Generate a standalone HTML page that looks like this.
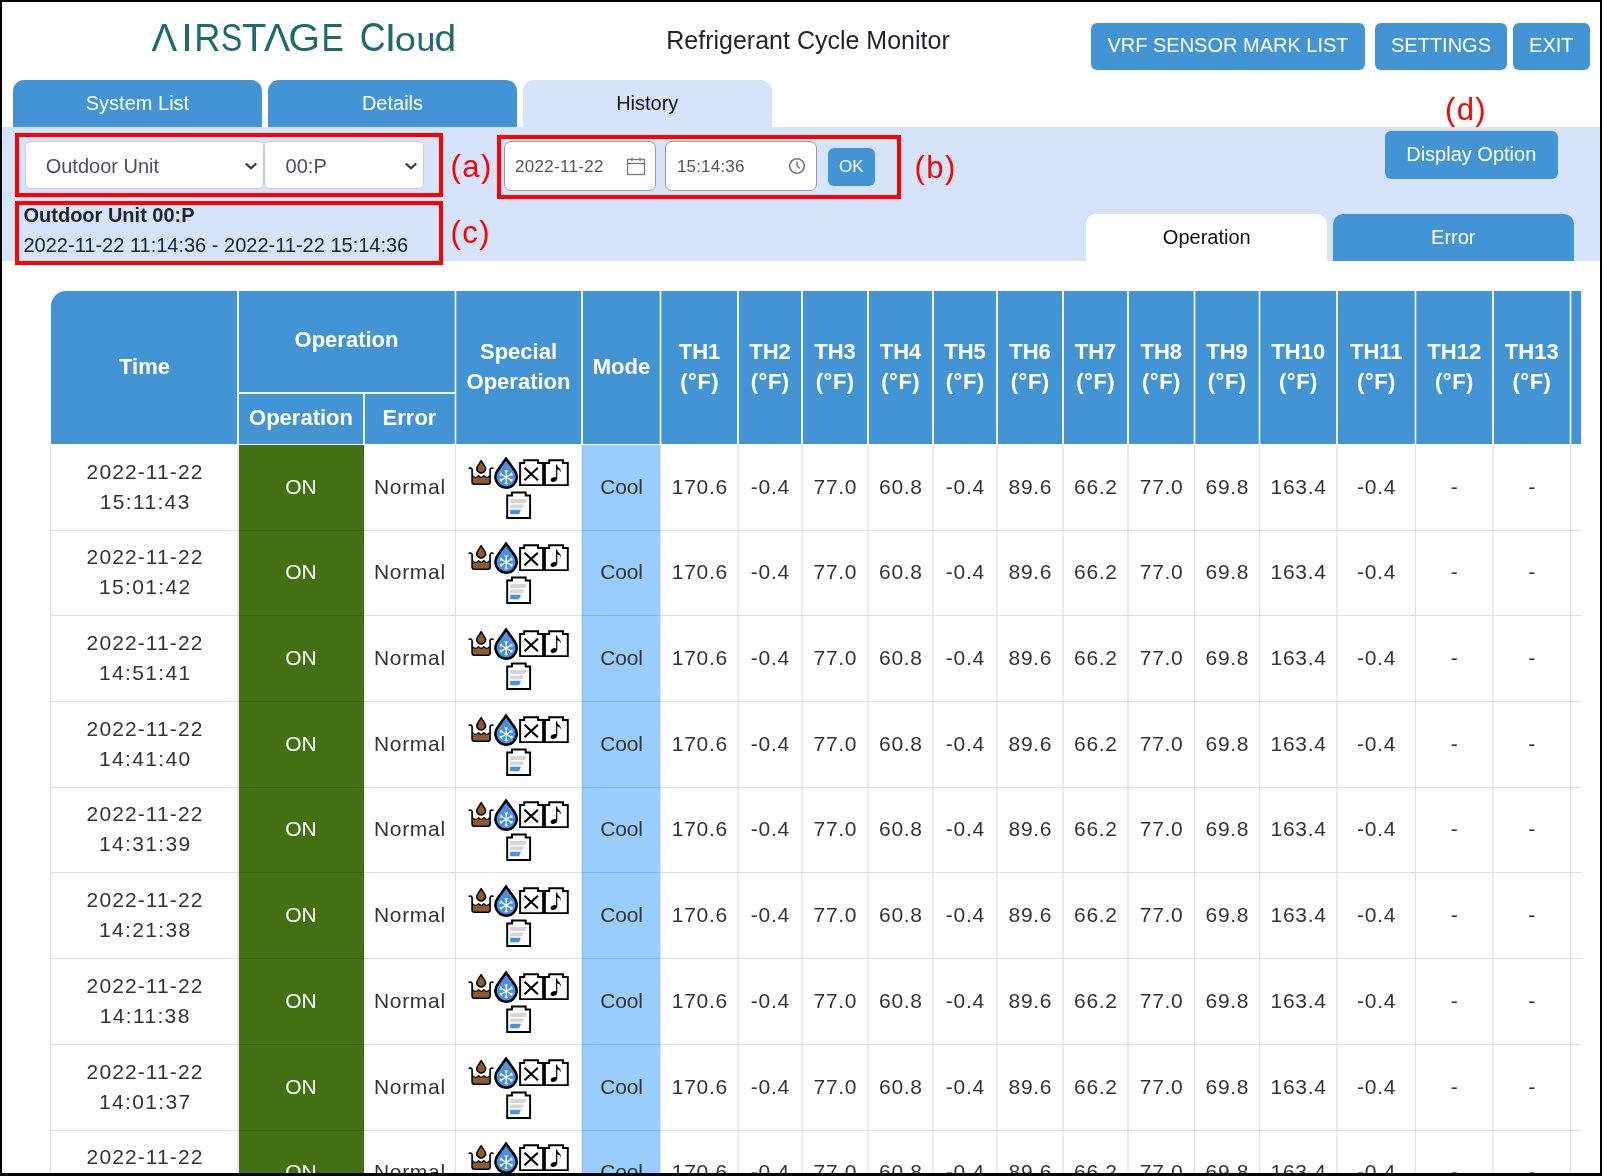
<!DOCTYPE html>
<html><head><meta charset="utf-8">
<style>
html,body{margin:0;padding:0;}
body{will-change:transform;width:1602px;height:1176px;overflow:hidden;position:relative;background:#fff;font-family:"Liberation Sans", sans-serif;}
.t{position:absolute;white-space:nowrap;}
.r{position:absolute;}
.clip{position:absolute;left:0;top:0;width:1581px;height:1176px;overflow:hidden;}
.frame{position:absolute;left:0;top:0;width:1602px;height:1176px;box-sizing:border-box;border:2px solid #000;border-bottom-width:3px;z-index:50;}
</style></head><body>
<div class="t" style="left:0;top:0;font-size:100px;line-height:100px;color:#1e6a6f;transform-origin:0 0;transform:matrix(0.38479,0,0,0.39127,151.508,17.937)">Λ</div>
<div class="t" style="left:0;top:0;font-size:100px;line-height:100px;color:#1e6a6f;transform-origin:0 0;transform:matrix(0.43243,0,0,0.39127,180.900,17.937)">I</div>
<div class="t" style="left:0;top:0;font-size:100px;line-height:100px;color:#1e6a6f;transform-origin:0 0;transform:matrix(0.36287,0,0,0.39127,194.206,17.937)">R</div>
<div class="t" style="left:0;top:0;font-size:100px;line-height:100px;color:#1e6a6f;transform-origin:0 0;transform:matrix(0.31826,0,0,0.39152,220.968,17.925)">S</div>
<div class="t" style="left:0;top:0;font-size:100px;line-height:100px;color:#1e6a6f;transform-origin:0 0;transform:matrix(0.39823,0,0,0.39127,242.104,17.937)">T</div>
<div class="t" style="left:0;top:0;font-size:100px;line-height:100px;color:#1e6a6f;transform-origin:0 0;transform:matrix(0.39240,0,0,0.39127,263.904,17.937)">Λ</div>
<div class="t" style="left:0;top:0;font-size:100px;line-height:100px;color:#1e6a6f;transform-origin:0 0;transform:matrix(0.41073,0,0,0.39011,288.146,18.046)">G</div>
<div class="t" style="left:0;top:0;font-size:100px;line-height:100px;color:#1e6a6f;transform-origin:0 0;transform:matrix(0.33364,0,0,0.39127,321.447,17.937)">E</div>
<div class="t" style="left:0;top:0;font-size:100px;line-height:100px;color:#1e6a6f;transform-origin:0 0;transform:matrix(0.35731,0,0,0.40000,359.813,17.200)">C</div>
<div class="t" style="left:0;top:0;font-size:100px;line-height:100px;color:#1e6a6f;transform-origin:0 0;transform:matrix(0.44571,0,0,0.37517,385.491,19.298)">l</div>
<div class="t" style="left:0;top:0;font-size:100px;line-height:100px;color:#1e6a6f;transform-origin:0 0;transform:matrix(0.38095,0,0,0.33790,394.781,22.510)">o</div>
<div class="t" style="left:0;top:0;font-size:100px;line-height:100px;color:#1e6a6f;transform-origin:0 0;transform:matrix(0.33647,0,0,0.32558,416.513,23.563)">u</div>
<div class="t" style="left:0;top:0;font-size:100px;line-height:100px;color:#1e6a6f;transform-origin:0 0;transform:matrix(0.38889,0,0,0.37551,434.547,19.294)">d</div>
<div class="t" style="left:599px;width:418px;text-align:center;top:27.94px;font-size:25.0px;line-height:25.0px;color:#212529;font-weight:normal;letter-spacing:0px;text-indent:0px;">Refrigerant Cycle Monitor</div>
<div class="r" style="left:1091px;top:23px;width:274px;height:47px;background:#4294d4;border-radius:6px;"></div>
<div class="t" style="left:1091px;width:274px;text-align:center;top:35.37px;font-size:20px;line-height:20px;color:#fff;font-weight:normal;letter-spacing:0px;text-indent:0px;">VRF SENSOR MARK LIST</div>
<div class="r" style="left:1375px;top:23px;width:132px;height:47px;background:#4294d4;border-radius:6px;"></div>
<div class="t" style="left:1375px;width:132px;text-align:center;top:35.37px;font-size:20px;line-height:20px;color:#fff;font-weight:normal;letter-spacing:0px;text-indent:0px;">SETTINGS</div>
<div class="r" style="left:1512.6px;top:23px;width:77.40000000000009px;height:47px;background:#4294d4;border-radius:6px;"></div>
<div class="t" style="left:1512.6px;width:77.40000000000009px;text-align:center;top:35.37px;font-size:20px;line-height:20px;color:#fff;font-weight:normal;letter-spacing:0px;text-indent:0px;">EXIT</div>
<div class="r" style="left:12.5px;top:80px;width:249.89999999999998px;height:47.5px;background:#4294d4;border-radius:11px 11px 0 0;"></div>
<div class="t" style="left:12.5px;width:249.89999999999998px;text-align:center;top:92.77px;font-size:20px;line-height:20px;color:#fff;font-weight:normal;letter-spacing:0px;text-indent:0px;">System List</div>
<div class="r" style="left:267.6px;top:80px;width:249.79999999999995px;height:47.5px;background:#4294d4;border-radius:11px 11px 0 0;"></div>
<div class="t" style="left:267.6px;width:249.79999999999995px;text-align:center;top:92.77px;font-size:20px;line-height:20px;color:#fff;font-weight:normal;letter-spacing:0px;text-indent:0px;">Details</div>
<div class="r" style="left:522.5px;top:80px;width:249.5px;height:47.5px;background:#d5e3fb;border-radius:11px 11px 0 0;"></div>
<div class="t" style="left:522.5px;width:249.5px;text-align:center;top:92.77px;font-size:20px;line-height:20px;color:#111;font-weight:normal;letter-spacing:0px;text-indent:0px;">History</div>
<div class="r" style="left:2px;top:127px;width:1598px;height:134px;background:#d5e3fb;"></div>
<div class="r" style="left:24.7px;top:141.3px;width:238.90000000000003px;height:47.29999999999998px;background:#fff;border:1.3px solid #c9d0d8;border-radius:6px;box-sizing:border-box;"></div>
<div class="t" style="left:45.7px;top:155.67px;font-size:20px;line-height:20px;color:#495057;font-weight:normal;letter-spacing:0px;">Outdoor Unit</div>
<svg class="r" style="left:245.2px;top:161.6px" width="12" height="8" viewBox="0 0 12 8"><path d="M0.8 1.5 L6 6.3 L11.2 1.5" fill="none" stroke="#343a40" stroke-width="2.3" stroke-linecap="butt" stroke-linejoin="miter"/></svg>
<div class="r" style="left:263.9px;top:141.3px;width:159.70000000000005px;height:47.29999999999998px;background:#fff;border:1.3px solid #c9d0d8;border-radius:6px;box-sizing:border-box;"></div>
<div class="t" style="left:285.6px;top:155.67px;font-size:20px;line-height:20px;color:#495057;font-weight:normal;letter-spacing:0px;">00:P</div>
<svg class="r" style="left:405.4px;top:161.6px" width="12" height="8" viewBox="0 0 12 8"><path d="M0.8 1.5 L6 6.3 L11.2 1.5" fill="none" stroke="#343a40" stroke-width="2.3" stroke-linecap="butt" stroke-linejoin="miter"/></svg>
<div class="r" style="left:504.1px;top:141.2px;width:151.69999999999993px;height:49.70000000000002px;background:#fff;border:1px solid #9a9a9a;border-radius:7px;box-sizing:border-box;"></div>
<div class="t" style="left:515.0px;top:158.41px;font-size:17px;line-height:17px;color:#555;font-weight:normal;letter-spacing:0.3px;">2022-11-22</div>
<svg class="r" style="left:626px;top:156px" width="20" height="20" viewBox="0 0 20 20"><rect x="1.5" y="3.5" width="17" height="15" fill="none" stroke="#777" stroke-width="1.3"/><line x1="1.5" y1="7.5" x2="18.5" y2="7.5" stroke="#777" stroke-width="1.3"/><line x1="6" y1="1.5" x2="6" y2="5" stroke="#777" stroke-width="1.3"/><line x1="14" y1="1.5" x2="14" y2="5" stroke="#777" stroke-width="1.3"/></svg>
<div class="r" style="left:665.2px;top:141.2px;width:151.69999999999993px;height:49.70000000000002px;background:#fff;border:1px solid #9a9a9a;border-radius:7px;box-sizing:border-box;"></div>
<div class="t" style="left:676.9px;top:158.41px;font-size:17px;line-height:17px;color:#555;font-weight:normal;letter-spacing:0.2px;">15:14:36</div>
<svg class="r" style="left:788px;top:157px" width="18" height="18" viewBox="0 0 18 18"><circle cx="9" cy="9" r="7.3" fill="none" stroke="#777" stroke-width="1.6"/><path d="M9 4.5 V9 L12 11.5" fill="none" stroke="#777" stroke-width="1.5"/></svg>
<div class="r" style="left:827.6px;top:147.5px;width:47.39999999999998px;height:38.400000000000006px;background:#4294d4;border-radius:6px;"></div>
<div class="t" style="left:827.6px;width:47.39999999999998px;text-align:center;top:158.01px;font-size:17px;line-height:17px;color:#fff;font-weight:normal;letter-spacing:0px;text-indent:0px;">OK</div>
<div class="r" style="left:1385px;top:131px;width:172.5px;height:47.80000000000001px;background:#4294d4;border-radius:6px;"></div>
<div class="t" style="left:1385px;width:172.5px;text-align:center;top:144.07px;font-size:20px;line-height:20px;color:#fff;font-weight:normal;letter-spacing:0px;text-indent:0px;">Display Option</div>
<div class="t" style="left:23.5px;top:205.17px;font-size:20px;line-height:20px;color:#212529;font-weight:bold;letter-spacing:0px;">Outdoor Unit 00:P</div>
<div class="t" style="left:23.5px;top:235.37px;font-size:20px;line-height:20px;color:#212529;font-weight:normal;letter-spacing:0px;">2022-11-22 11:14:36 - 2022-11-22 15:14:36</div>
<div class="r" style="left:1086.1px;top:213.6px;width:241.4000000000001px;height:47.400000000000006px;background:#fff;border-radius:10px 10px 0 0;"></div>
<div class="t" style="left:1086.1px;width:241.4000000000001px;text-align:center;top:226.77px;font-size:20px;line-height:20px;color:#111;font-weight:normal;letter-spacing:0px;text-indent:0px;">Operation</div>
<div class="r" style="left:1332.7px;top:213.6px;width:241.20000000000005px;height:47.400000000000006px;background:#4294d4;border-radius:10px 10px 0 0;"></div>
<div class="t" style="left:1332.7px;width:241.20000000000005px;text-align:center;top:226.77px;font-size:20px;line-height:20px;color:#fff;font-weight:normal;letter-spacing:0px;text-indent:0px;">Error</div>
<div class="r" style="left:15px;top:133px;width:428px;height:64px;border:4px solid #ff0000;box-sizing:border-box;"></div>
<div class="r" style="left:497px;top:135px;width:404px;height:64px;border:4px solid #ff0000;box-sizing:border-box;"></div>
<div class="r" style="left:15px;top:201px;width:428px;height:63.60000000000002px;border:4px solid #ff0000;box-sizing:border-box;"></div>
<div class="t" style="left:450.6px;top:151.36px;font-size:31px;line-height:31px;color:#ff0000;font-weight:normal;letter-spacing:1.4px;">(a)</div>
<div class="t" style="left:914.6px;top:151.66px;font-size:31px;line-height:31px;color:#ff0000;font-weight:normal;letter-spacing:1.4px;">(b)</div>
<div class="t" style="left:450.6px;top:217.46px;font-size:31px;line-height:31px;color:#ff0000;font-weight:normal;letter-spacing:1.4px;">(c)</div>
<div class="t" style="left:1445px;top:93.56px;font-size:31px;line-height:31px;color:#ff0000;font-weight:normal;letter-spacing:1.4px;">(d)</div>
<div class="clip"><div class="r" style="left:51px;top:291px;width:1649px;height:153px;background:#4294d4;border-top-left-radius:15px;"></div>
<div class="r" style="left:237px;top:291px;width:2px;height:153px;background:#eef4fb;"></div>
<div class="r" style="left:363px;top:392px;width:2px;height:52px;background:#eef4fb;"></div>
<div class="r" style="left:455px;top:291px;width:1px;height:153px;background:#fff;"></div>
<div class="r" style="left:454px;top:291px;width:1px;height:153px;background:rgba(255,255,255,0.3);"></div>
<div class="r" style="left:456px;top:291px;width:1px;height:153px;background:rgba(255,255,255,0.3);"></div>
<div class="r" style="left:581px;top:291px;width:2px;height:153px;background:#eef4fb;"></div>
<div class="r" style="left:660px;top:291px;width:1px;height:153px;background:#fff;"></div>
<div class="r" style="left:659px;top:291px;width:1px;height:153px;background:rgba(255,255,255,0.3);"></div>
<div class="r" style="left:661px;top:291px;width:1px;height:153px;background:rgba(255,255,255,0.3);"></div>
<div class="r" style="left:737px;top:291px;width:2px;height:153px;background:#eef4fb;"></div>
<div class="r" style="left:801px;top:291px;width:2px;height:153px;background:#eef4fb;"></div>
<div class="r" style="left:867px;top:291px;width:2px;height:153px;background:#eef4fb;"></div>
<div class="r" style="left:932px;top:291px;width:2px;height:153px;background:#eef4fb;"></div>
<div class="r" style="left:996px;top:291px;width:2px;height:153px;background:#eef4fb;"></div>
<div class="r" style="left:1062px;top:291px;width:2px;height:153px;background:#eef4fb;"></div>
<div class="r" style="left:1127px;top:291px;width:2px;height:153px;background:#eef4fb;"></div>
<div class="r" style="left:1194px;top:291px;width:1px;height:153px;background:#fff;"></div>
<div class="r" style="left:1193px;top:291px;width:1px;height:153px;background:rgba(255,255,255,0.3);"></div>
<div class="r" style="left:1195px;top:291px;width:1px;height:153px;background:rgba(255,255,255,0.3);"></div>
<div class="r" style="left:1259px;top:291px;width:1px;height:153px;background:#fff;"></div>
<div class="r" style="left:1258px;top:291px;width:1px;height:153px;background:rgba(255,255,255,0.3);"></div>
<div class="r" style="left:1260px;top:291px;width:1px;height:153px;background:rgba(255,255,255,0.3);"></div>
<div class="r" style="left:1336px;top:291px;width:2px;height:153px;background:#eef4fb;"></div>
<div class="r" style="left:1415px;top:291px;width:1px;height:153px;background:#fff;"></div>
<div class="r" style="left:1414px;top:291px;width:1px;height:153px;background:rgba(255,255,255,0.3);"></div>
<div class="r" style="left:1416px;top:291px;width:1px;height:153px;background:rgba(255,255,255,0.3);"></div>
<div class="r" style="left:1492px;top:291px;width:2px;height:153px;background:#eef4fb;"></div>
<div class="r" style="left:1570px;top:291px;width:1px;height:153px;background:#fff;"></div>
<div class="r" style="left:1569px;top:291px;width:1px;height:153px;background:rgba(255,255,255,0.3);"></div>
<div class="r" style="left:1571px;top:291px;width:1px;height:153px;background:rgba(255,255,255,0.3);"></div>
<div class="r" style="left:238px;top:392px;width:217px;height:2px;background:#eef4fb;"></div>
<div class="t" style="left:51px;width:187px;text-align:center;top:356.18px;font-size:22px;line-height:22px;color:#ffffff;font-weight:bold;letter-spacing:0px;text-indent:0px;">Time</div>
<div class="t" style="left:238px;width:217px;text-align:center;top:329.38px;font-size:22px;line-height:22px;color:#ffffff;font-weight:bold;letter-spacing:0px;text-indent:0px;">Operation</div>
<div class="t" style="left:238px;width:126px;text-align:center;top:406.58px;font-size:22px;line-height:22px;color:#ffffff;font-weight:bold;letter-spacing:0px;text-indent:0px;">Operation</div>
<div class="t" style="left:364px;width:91px;text-align:center;top:406.58px;font-size:22px;line-height:22px;color:#ffffff;font-weight:bold;letter-spacing:0px;text-indent:0px;">Error</div>
<div class="t" style="left:455px;width:127px;text-align:center;top:341.08px;font-size:22px;line-height:22px;color:#ffffff;font-weight:bold;letter-spacing:0px;text-indent:0px;">Special</div>
<div class="t" style="left:455px;width:127px;text-align:center;top:371.08px;font-size:22px;line-height:22px;color:#ffffff;font-weight:bold;letter-spacing:0px;text-indent:0px;">Operation</div>
<div class="t" style="left:582px;width:79px;text-align:center;top:355.98px;font-size:22px;line-height:22px;color:#ffffff;font-weight:bold;letter-spacing:0px;text-indent:0px;">Mode</div>
<div class="t" style="left:661px;width:77px;text-align:center;top:341.08px;font-size:22px;line-height:22px;color:#ffffff;font-weight:bold;letter-spacing:0px;text-indent:0px;">TH1</div>
<div class="t" style="left:661px;width:77px;text-align:center;top:371.28px;font-size:22px;line-height:22px;color:#ffffff;font-weight:bold;letter-spacing:0.5px;text-indent:0.5px;">(&#176;F)</div>
<div class="t" style="left:738px;width:64px;text-align:center;top:341.08px;font-size:22px;line-height:22px;color:#ffffff;font-weight:bold;letter-spacing:0px;text-indent:0px;">TH2</div>
<div class="t" style="left:738px;width:64px;text-align:center;top:371.28px;font-size:22px;line-height:22px;color:#ffffff;font-weight:bold;letter-spacing:0.5px;text-indent:0.5px;">(&#176;F)</div>
<div class="t" style="left:802px;width:66px;text-align:center;top:341.08px;font-size:22px;line-height:22px;color:#ffffff;font-weight:bold;letter-spacing:0px;text-indent:0px;">TH3</div>
<div class="t" style="left:802px;width:66px;text-align:center;top:371.28px;font-size:22px;line-height:22px;color:#ffffff;font-weight:bold;letter-spacing:0.5px;text-indent:0.5px;">(&#176;F)</div>
<div class="t" style="left:868px;width:65px;text-align:center;top:341.08px;font-size:22px;line-height:22px;color:#ffffff;font-weight:bold;letter-spacing:0px;text-indent:0px;">TH4</div>
<div class="t" style="left:868px;width:65px;text-align:center;top:371.28px;font-size:22px;line-height:22px;color:#ffffff;font-weight:bold;letter-spacing:0.5px;text-indent:0.5px;">(&#176;F)</div>
<div class="t" style="left:933px;width:64px;text-align:center;top:341.08px;font-size:22px;line-height:22px;color:#ffffff;font-weight:bold;letter-spacing:0px;text-indent:0px;">TH5</div>
<div class="t" style="left:933px;width:64px;text-align:center;top:371.28px;font-size:22px;line-height:22px;color:#ffffff;font-weight:bold;letter-spacing:0.5px;text-indent:0.5px;">(&#176;F)</div>
<div class="t" style="left:997px;width:66px;text-align:center;top:341.08px;font-size:22px;line-height:22px;color:#ffffff;font-weight:bold;letter-spacing:0px;text-indent:0px;">TH6</div>
<div class="t" style="left:997px;width:66px;text-align:center;top:371.28px;font-size:22px;line-height:22px;color:#ffffff;font-weight:bold;letter-spacing:0.5px;text-indent:0.5px;">(&#176;F)</div>
<div class="t" style="left:1063px;width:65px;text-align:center;top:341.08px;font-size:22px;line-height:22px;color:#ffffff;font-weight:bold;letter-spacing:0px;text-indent:0px;">TH7</div>
<div class="t" style="left:1063px;width:65px;text-align:center;top:371.28px;font-size:22px;line-height:22px;color:#ffffff;font-weight:bold;letter-spacing:0.5px;text-indent:0.5px;">(&#176;F)</div>
<div class="t" style="left:1128px;width:66.5px;text-align:center;top:341.08px;font-size:22px;line-height:22px;color:#ffffff;font-weight:bold;letter-spacing:0px;text-indent:0px;">TH8</div>
<div class="t" style="left:1128px;width:66.5px;text-align:center;top:371.28px;font-size:22px;line-height:22px;color:#ffffff;font-weight:bold;letter-spacing:0.5px;text-indent:0.5px;">(&#176;F)</div>
<div class="t" style="left:1194.5px;width:65.0px;text-align:center;top:341.08px;font-size:22px;line-height:22px;color:#ffffff;font-weight:bold;letter-spacing:0px;text-indent:0px;">TH9</div>
<div class="t" style="left:1194.5px;width:65.0px;text-align:center;top:371.28px;font-size:22px;line-height:22px;color:#ffffff;font-weight:bold;letter-spacing:0.5px;text-indent:0.5px;">(&#176;F)</div>
<div class="t" style="left:1259.5px;width:77.5px;text-align:center;top:341.08px;font-size:22px;line-height:22px;color:#ffffff;font-weight:bold;letter-spacing:0px;text-indent:0px;">TH10</div>
<div class="t" style="left:1259.5px;width:77.5px;text-align:center;top:371.28px;font-size:22px;line-height:22px;color:#ffffff;font-weight:bold;letter-spacing:0.5px;text-indent:0.5px;">(&#176;F)</div>
<div class="t" style="left:1337px;width:78.5px;text-align:center;top:341.08px;font-size:22px;line-height:22px;color:#ffffff;font-weight:bold;letter-spacing:0px;text-indent:0px;">TH11</div>
<div class="t" style="left:1337px;width:78.5px;text-align:center;top:371.28px;font-size:22px;line-height:22px;color:#ffffff;font-weight:bold;letter-spacing:0.5px;text-indent:0.5px;">(&#176;F)</div>
<div class="t" style="left:1415.5px;width:77.5px;text-align:center;top:341.08px;font-size:22px;line-height:22px;color:#ffffff;font-weight:bold;letter-spacing:0px;text-indent:0px;">TH12</div>
<div class="t" style="left:1415.5px;width:77.5px;text-align:center;top:371.28px;font-size:22px;line-height:22px;color:#ffffff;font-weight:bold;letter-spacing:0.5px;text-indent:0.5px;">(&#176;F)</div>
<div class="t" style="left:1493px;width:77.5px;text-align:center;top:341.08px;font-size:22px;line-height:22px;color:#ffffff;font-weight:bold;letter-spacing:0px;text-indent:0px;">TH13</div>
<div class="t" style="left:1493px;width:77.5px;text-align:center;top:371.28px;font-size:22px;line-height:22px;color:#ffffff;font-weight:bold;letter-spacing:0.5px;text-indent:0.5px;">(&#176;F)</div>
<div class="t" style="left:1570.5px;width:89.5px;text-align:center;top:341.08px;font-size:22px;line-height:22px;color:#ffffff;font-weight:bold;letter-spacing:0px;text-indent:0px;">TH14</div>
<div class="t" style="left:1570.5px;width:89.5px;text-align:center;top:371.28px;font-size:22px;line-height:22px;color:#ffffff;font-weight:bold;letter-spacing:0.5px;text-indent:0.5px;">(&#176;F)</div>
<div class="r" style="left:239px;top:445px;width:125px;height:86px;background:#437012;"></div>
<div class="r" style="left:582px;top:445px;width:78px;height:86px;background:#99ccff;"></div>
<div class="r" style="left:50px;top:530px;width:1650px;height:1px;background:rgba(0,0,0,0.13);"></div>
<div class="r" style="left:50px;top:445px;width:1px;height:85px;background:rgba(0,0,0,0.13);"></div>
<div class="r" style="left:237px;top:445px;width:2px;height:85px;background:rgba(0,0,0,0.075);"></div>
<div class="r" style="left:363px;top:445px;width:2px;height:85px;background:rgba(0,0,0,0.075);"></div>
<div class="r" style="left:455px;top:445px;width:1px;height:85px;background:rgba(0,0,0,0.13);"></div>
<div class="r" style="left:581px;top:445px;width:2px;height:85px;background:rgba(0,0,0,0.075);"></div>
<div class="r" style="left:660px;top:445px;width:1px;height:85px;background:rgba(0,0,0,0.13);"></div>
<div class="r" style="left:737px;top:445px;width:2px;height:85px;background:rgba(0,0,0,0.075);"></div>
<div class="r" style="left:801px;top:445px;width:2px;height:85px;background:rgba(0,0,0,0.075);"></div>
<div class="r" style="left:867px;top:445px;width:2px;height:85px;background:rgba(0,0,0,0.075);"></div>
<div class="r" style="left:932px;top:445px;width:2px;height:85px;background:rgba(0,0,0,0.075);"></div>
<div class="r" style="left:996px;top:445px;width:2px;height:85px;background:rgba(0,0,0,0.075);"></div>
<div class="r" style="left:1062px;top:445px;width:2px;height:85px;background:rgba(0,0,0,0.075);"></div>
<div class="r" style="left:1127px;top:445px;width:2px;height:85px;background:rgba(0,0,0,0.075);"></div>
<div class="r" style="left:1194px;top:445px;width:1px;height:85px;background:rgba(0,0,0,0.13);"></div>
<div class="r" style="left:1259px;top:445px;width:1px;height:85px;background:rgba(0,0,0,0.13);"></div>
<div class="r" style="left:1336px;top:445px;width:2px;height:85px;background:rgba(0,0,0,0.075);"></div>
<div class="r" style="left:1415px;top:445px;width:1px;height:85px;background:rgba(0,0,0,0.13);"></div>
<div class="r" style="left:1492px;top:445px;width:2px;height:85px;background:rgba(0,0,0,0.075);"></div>
<div class="r" style="left:1570px;top:445px;width:1px;height:85px;background:rgba(0,0,0,0.13);"></div>
<div class="t" style="left:51px;width:187px;text-align:center;top:461.12px;font-size:21px;line-height:21px;color:#333333;font-weight:normal;letter-spacing:1.1px;text-indent:1.1px;">2022-11-22</div>
<div class="t" style="left:51px;width:187px;text-align:center;top:490.92px;font-size:21px;line-height:21px;color:#333333;font-weight:normal;letter-spacing:1.35px;text-indent:1.35px;">15:11:43</div>
<div class="t" style="left:238px;width:126px;text-align:center;top:476.12px;font-size:21px;line-height:21px;color:#fff;font-weight:normal;letter-spacing:0px;text-indent:0px;">ON</div>
<div class="t" style="left:364px;width:91px;text-align:center;top:476.12px;font-size:21px;line-height:21px;color:#333333;font-weight:normal;letter-spacing:0.7px;text-indent:0.7px;">Normal</div>
<svg class="r" style="left:465px;top:453.70px" width="110" height="68" viewBox="0 0 110 68">
<path d="M16.15 6.6 L12.52 12.29 A4.3 4.3 0 1 0 19.78 12.29 Z" fill="#8e5a2a" stroke="#000" stroke-width="1.5" stroke-linejoin="round"/>
<path d="M7.6 21.7 Q10.55 25.2 13.5 21.7 Q16.2 25.2 18.9 21.7 Q21.8 25.2 24.6 21.7 V29.2 H7.6 Z" fill="#8e5a2a"/>
<path d="M7.6 21.7 Q10.55 25.2 13.5 21.7 Q16.2 25.2 18.9 21.7 Q21.8 25.2 24.6 21.7" fill="none" stroke="#000" stroke-width="1.3" stroke-linejoin="round"/>
<path d="M4.2 14.3 Q6.6 13.6 7.1 15.6 V28 Q7.1 30.1 9.3 30.1 H22.9 Q25.1 30.1 25.1 28 V15.6 Q25.6 13.6 27.9 14.2" fill="none" stroke="#000" stroke-width="1.65" stroke-linecap="round" stroke-linejoin="round"/>
<path d="M41.1 4.6 L32.37 16.82 A10.7 10.7 0 1 0 49.83 16.82 Z" fill="#4a90e2" stroke="#000" stroke-width="2.5" stroke-linejoin="miter" stroke-miterlimit="10"/>
<g stroke="#fff" stroke-width="1.15" stroke-linecap="round" fill="none"><path d="M41.20 23.20 L41.20 16.50 M41.20 23.20 L47.00 19.85 M41.20 23.20 L47.00 26.55 M41.20 23.20 L41.20 29.90 M41.20 23.20 L35.40 26.55 M41.20 23.20 L35.40 19.85"/><path stroke-width="0.95" d="M41.20 18.38 L39.97 16.80 M41.20 18.38 L42.43 16.80 M45.38 20.79 L46.13 18.93 M45.38 20.79 L47.36 21.07 M45.38 25.61 L47.36 25.33 M45.38 25.61 L46.13 27.47 M41.20 28.02 L42.43 29.60 M41.20 28.02 L39.97 29.60 M37.02 25.61 L36.27 27.47 M37.02 25.61 L35.04 25.33 M37.02 20.79 L35.04 21.07 M37.02 20.79 L36.27 18.93"/></g>
<path d="M55.1 8.9 H59.2 V6.3 H73.1 V8.9 H79 V31.1 H55.1 Z" fill="#fff" stroke="#000" stroke-width="1.95"/>
<path d="M59.5 13.7 L72.9 26.3 M72.9 13.7 L59.5 26.3" stroke="#000" stroke-width="2.1"/>
<path d="M79 8.9 H84.2 V6.3 H98 V8.9 H102.8 V31.1 H79 Z" fill="#fff" stroke="#000" stroke-width="1.95"/>
<path d="M79 8.9 V31.1" stroke="#000" stroke-width="3.7"/>
<ellipse cx="88.7" cy="25.5" rx="3.2" ry="2.3" transform="rotate(-25 88.7 25.5)" fill="#000"/>
<path d="M91.7 25 V10.6" fill="none" stroke="#000" stroke-width="1.2"/>
<path d="M91.1 10.4 C92 13.2 96.6 14.2 95.9 18.6 C95.4 16.4 93.6 15.4 91.1 15 Z" fill="#000"/>
<path d="M42.2 41.45 H46.95 V38.5 H60.7 V41.45 H65.1 V64.0 H42.2 Z" fill="#fff" stroke="#000" stroke-width="1.95"/>
<path d="M45.1 44.9 H62 L60 49 H45.1 Z" fill="#d6d6d6"/>
<path d="M45.1 50.5 H59 L57.3 54.2 H45.1 Z" fill="#d6d6d6"/>
<path d="M45.1 55.8 H56 L54.1 60.2 H45.1 Z" fill="#4a90e2"/>
</svg>
<div class="t" style="left:582px;width:79px;text-align:center;top:476.12px;font-size:21px;line-height:21px;color:#333333;font-weight:normal;letter-spacing:-0.2px;text-indent:-0.2px;">Cool</div>
<div class="t" style="left:661px;width:77px;text-align:center;top:476.12px;font-size:21px;line-height:21px;color:#333333;font-weight:normal;letter-spacing:0.7px;text-indent:0.7px;">170.6</div>
<div class="t" style="left:738px;width:64px;text-align:center;top:476.12px;font-size:21px;line-height:21px;color:#333333;font-weight:normal;letter-spacing:0.7px;text-indent:0.7px;">-0.4</div>
<div class="t" style="left:802px;width:66px;text-align:center;top:476.12px;font-size:21px;line-height:21px;color:#333333;font-weight:normal;letter-spacing:0.7px;text-indent:0.7px;">77.0</div>
<div class="t" style="left:868px;width:65px;text-align:center;top:476.12px;font-size:21px;line-height:21px;color:#333333;font-weight:normal;letter-spacing:0.7px;text-indent:0.7px;">60.8</div>
<div class="t" style="left:933px;width:64px;text-align:center;top:476.12px;font-size:21px;line-height:21px;color:#333333;font-weight:normal;letter-spacing:0.7px;text-indent:0.7px;">-0.4</div>
<div class="t" style="left:997px;width:66px;text-align:center;top:476.12px;font-size:21px;line-height:21px;color:#333333;font-weight:normal;letter-spacing:0.7px;text-indent:0.7px;">89.6</div>
<div class="t" style="left:1063px;width:65px;text-align:center;top:476.12px;font-size:21px;line-height:21px;color:#333333;font-weight:normal;letter-spacing:0.7px;text-indent:0.7px;">66.2</div>
<div class="t" style="left:1128px;width:66.5px;text-align:center;top:476.12px;font-size:21px;line-height:21px;color:#333333;font-weight:normal;letter-spacing:0.7px;text-indent:0.7px;">77.0</div>
<div class="t" style="left:1194.5px;width:65.0px;text-align:center;top:476.12px;font-size:21px;line-height:21px;color:#333333;font-weight:normal;letter-spacing:0.7px;text-indent:0.7px;">69.8</div>
<div class="t" style="left:1259.5px;width:77.5px;text-align:center;top:476.12px;font-size:21px;line-height:21px;color:#333333;font-weight:normal;letter-spacing:0.7px;text-indent:0.7px;">163.4</div>
<div class="t" style="left:1337px;width:78.5px;text-align:center;top:476.12px;font-size:21px;line-height:21px;color:#333333;font-weight:normal;letter-spacing:0.7px;text-indent:0.7px;">-0.4</div>
<div class="t" style="left:1415.5px;width:77.5px;text-align:center;top:476.12px;font-size:21px;line-height:21px;color:#333333;font-weight:normal;letter-spacing:0.7px;text-indent:0.7px;">-</div>
<div class="t" style="left:1493px;width:77.5px;text-align:center;top:476.12px;font-size:21px;line-height:21px;color:#333333;font-weight:normal;letter-spacing:0.7px;text-indent:0.7px;">-</div>
<div class="r" style="left:239px;top:531px;width:125px;height:85px;background:#437012;"></div>
<div class="r" style="left:582px;top:531px;width:78px;height:85px;background:#99ccff;"></div>
<div class="r" style="left:50px;top:615px;width:1650px;height:1px;background:rgba(0,0,0,0.13);"></div>
<div class="r" style="left:50px;top:531px;width:1px;height:84px;background:rgba(0,0,0,0.13);"></div>
<div class="r" style="left:237px;top:531px;width:2px;height:84px;background:rgba(0,0,0,0.075);"></div>
<div class="r" style="left:363px;top:531px;width:2px;height:84px;background:rgba(0,0,0,0.075);"></div>
<div class="r" style="left:455px;top:531px;width:1px;height:84px;background:rgba(0,0,0,0.13);"></div>
<div class="r" style="left:581px;top:531px;width:2px;height:84px;background:rgba(0,0,0,0.075);"></div>
<div class="r" style="left:660px;top:531px;width:1px;height:84px;background:rgba(0,0,0,0.13);"></div>
<div class="r" style="left:737px;top:531px;width:2px;height:84px;background:rgba(0,0,0,0.075);"></div>
<div class="r" style="left:801px;top:531px;width:2px;height:84px;background:rgba(0,0,0,0.075);"></div>
<div class="r" style="left:867px;top:531px;width:2px;height:84px;background:rgba(0,0,0,0.075);"></div>
<div class="r" style="left:932px;top:531px;width:2px;height:84px;background:rgba(0,0,0,0.075);"></div>
<div class="r" style="left:996px;top:531px;width:2px;height:84px;background:rgba(0,0,0,0.075);"></div>
<div class="r" style="left:1062px;top:531px;width:2px;height:84px;background:rgba(0,0,0,0.075);"></div>
<div class="r" style="left:1127px;top:531px;width:2px;height:84px;background:rgba(0,0,0,0.075);"></div>
<div class="r" style="left:1194px;top:531px;width:1px;height:84px;background:rgba(0,0,0,0.13);"></div>
<div class="r" style="left:1259px;top:531px;width:1px;height:84px;background:rgba(0,0,0,0.13);"></div>
<div class="r" style="left:1336px;top:531px;width:2px;height:84px;background:rgba(0,0,0,0.075);"></div>
<div class="r" style="left:1415px;top:531px;width:1px;height:84px;background:rgba(0,0,0,0.13);"></div>
<div class="r" style="left:1492px;top:531px;width:2px;height:84px;background:rgba(0,0,0,0.075);"></div>
<div class="r" style="left:1570px;top:531px;width:1px;height:84px;background:rgba(0,0,0,0.13);"></div>
<div class="t" style="left:51px;width:187px;text-align:center;top:546.12px;font-size:21px;line-height:21px;color:#333333;font-weight:normal;letter-spacing:1.1px;text-indent:1.1px;">2022-11-22</div>
<div class="t" style="left:51px;width:187px;text-align:center;top:575.92px;font-size:21px;line-height:21px;color:#333333;font-weight:normal;letter-spacing:1.35px;text-indent:1.35px;">15:01:42</div>
<div class="t" style="left:238px;width:126px;text-align:center;top:561.12px;font-size:21px;line-height:21px;color:#fff;font-weight:normal;letter-spacing:0px;text-indent:0px;">ON</div>
<div class="t" style="left:364px;width:91px;text-align:center;top:561.12px;font-size:21px;line-height:21px;color:#333333;font-weight:normal;letter-spacing:0.7px;text-indent:0.7px;">Normal</div>
<svg class="r" style="left:465px;top:538.70px" width="110" height="68" viewBox="0 0 110 68">
<path d="M16.15 6.6 L12.52 12.29 A4.3 4.3 0 1 0 19.78 12.29 Z" fill="#8e5a2a" stroke="#000" stroke-width="1.5" stroke-linejoin="round"/>
<path d="M7.6 21.7 Q10.55 25.2 13.5 21.7 Q16.2 25.2 18.9 21.7 Q21.8 25.2 24.6 21.7 V29.2 H7.6 Z" fill="#8e5a2a"/>
<path d="M7.6 21.7 Q10.55 25.2 13.5 21.7 Q16.2 25.2 18.9 21.7 Q21.8 25.2 24.6 21.7" fill="none" stroke="#000" stroke-width="1.3" stroke-linejoin="round"/>
<path d="M4.2 14.3 Q6.6 13.6 7.1 15.6 V28 Q7.1 30.1 9.3 30.1 H22.9 Q25.1 30.1 25.1 28 V15.6 Q25.6 13.6 27.9 14.2" fill="none" stroke="#000" stroke-width="1.65" stroke-linecap="round" stroke-linejoin="round"/>
<path d="M41.1 4.6 L32.37 16.82 A10.7 10.7 0 1 0 49.83 16.82 Z" fill="#4a90e2" stroke="#000" stroke-width="2.5" stroke-linejoin="miter" stroke-miterlimit="10"/>
<g stroke="#fff" stroke-width="1.15" stroke-linecap="round" fill="none"><path d="M41.20 23.20 L41.20 16.50 M41.20 23.20 L47.00 19.85 M41.20 23.20 L47.00 26.55 M41.20 23.20 L41.20 29.90 M41.20 23.20 L35.40 26.55 M41.20 23.20 L35.40 19.85"/><path stroke-width="0.95" d="M41.20 18.38 L39.97 16.80 M41.20 18.38 L42.43 16.80 M45.38 20.79 L46.13 18.93 M45.38 20.79 L47.36 21.07 M45.38 25.61 L47.36 25.33 M45.38 25.61 L46.13 27.47 M41.20 28.02 L42.43 29.60 M41.20 28.02 L39.97 29.60 M37.02 25.61 L36.27 27.47 M37.02 25.61 L35.04 25.33 M37.02 20.79 L35.04 21.07 M37.02 20.79 L36.27 18.93"/></g>
<path d="M55.1 8.9 H59.2 V6.3 H73.1 V8.9 H79 V31.1 H55.1 Z" fill="#fff" stroke="#000" stroke-width="1.95"/>
<path d="M59.5 13.7 L72.9 26.3 M72.9 13.7 L59.5 26.3" stroke="#000" stroke-width="2.1"/>
<path d="M79 8.9 H84.2 V6.3 H98 V8.9 H102.8 V31.1 H79 Z" fill="#fff" stroke="#000" stroke-width="1.95"/>
<path d="M79 8.9 V31.1" stroke="#000" stroke-width="3.7"/>
<ellipse cx="88.7" cy="25.5" rx="3.2" ry="2.3" transform="rotate(-25 88.7 25.5)" fill="#000"/>
<path d="M91.7 25 V10.6" fill="none" stroke="#000" stroke-width="1.2"/>
<path d="M91.1 10.4 C92 13.2 96.6 14.2 95.9 18.6 C95.4 16.4 93.6 15.4 91.1 15 Z" fill="#000"/>
<path d="M42.2 41.45 H46.95 V38.5 H60.7 V41.45 H65.1 V64.0 H42.2 Z" fill="#fff" stroke="#000" stroke-width="1.95"/>
<path d="M45.1 44.9 H62 L60 49 H45.1 Z" fill="#d6d6d6"/>
<path d="M45.1 50.5 H59 L57.3 54.2 H45.1 Z" fill="#d6d6d6"/>
<path d="M45.1 55.8 H56 L54.1 60.2 H45.1 Z" fill="#4a90e2"/>
</svg>
<div class="t" style="left:582px;width:79px;text-align:center;top:561.12px;font-size:21px;line-height:21px;color:#333333;font-weight:normal;letter-spacing:-0.2px;text-indent:-0.2px;">Cool</div>
<div class="t" style="left:661px;width:77px;text-align:center;top:561.12px;font-size:21px;line-height:21px;color:#333333;font-weight:normal;letter-spacing:0.7px;text-indent:0.7px;">170.6</div>
<div class="t" style="left:738px;width:64px;text-align:center;top:561.12px;font-size:21px;line-height:21px;color:#333333;font-weight:normal;letter-spacing:0.7px;text-indent:0.7px;">-0.4</div>
<div class="t" style="left:802px;width:66px;text-align:center;top:561.12px;font-size:21px;line-height:21px;color:#333333;font-weight:normal;letter-spacing:0.7px;text-indent:0.7px;">77.0</div>
<div class="t" style="left:868px;width:65px;text-align:center;top:561.12px;font-size:21px;line-height:21px;color:#333333;font-weight:normal;letter-spacing:0.7px;text-indent:0.7px;">60.8</div>
<div class="t" style="left:933px;width:64px;text-align:center;top:561.12px;font-size:21px;line-height:21px;color:#333333;font-weight:normal;letter-spacing:0.7px;text-indent:0.7px;">-0.4</div>
<div class="t" style="left:997px;width:66px;text-align:center;top:561.12px;font-size:21px;line-height:21px;color:#333333;font-weight:normal;letter-spacing:0.7px;text-indent:0.7px;">89.6</div>
<div class="t" style="left:1063px;width:65px;text-align:center;top:561.12px;font-size:21px;line-height:21px;color:#333333;font-weight:normal;letter-spacing:0.7px;text-indent:0.7px;">66.2</div>
<div class="t" style="left:1128px;width:66.5px;text-align:center;top:561.12px;font-size:21px;line-height:21px;color:#333333;font-weight:normal;letter-spacing:0.7px;text-indent:0.7px;">77.0</div>
<div class="t" style="left:1194.5px;width:65.0px;text-align:center;top:561.12px;font-size:21px;line-height:21px;color:#333333;font-weight:normal;letter-spacing:0.7px;text-indent:0.7px;">69.8</div>
<div class="t" style="left:1259.5px;width:77.5px;text-align:center;top:561.12px;font-size:21px;line-height:21px;color:#333333;font-weight:normal;letter-spacing:0.7px;text-indent:0.7px;">163.4</div>
<div class="t" style="left:1337px;width:78.5px;text-align:center;top:561.12px;font-size:21px;line-height:21px;color:#333333;font-weight:normal;letter-spacing:0.7px;text-indent:0.7px;">-0.4</div>
<div class="t" style="left:1415.5px;width:77.5px;text-align:center;top:561.12px;font-size:21px;line-height:21px;color:#333333;font-weight:normal;letter-spacing:0.7px;text-indent:0.7px;">-</div>
<div class="t" style="left:1493px;width:77.5px;text-align:center;top:561.12px;font-size:21px;line-height:21px;color:#333333;font-weight:normal;letter-spacing:0.7px;text-indent:0.7px;">-</div>
<div class="r" style="left:239px;top:616px;width:125px;height:86px;background:#437012;"></div>
<div class="r" style="left:582px;top:616px;width:78px;height:86px;background:#99ccff;"></div>
<div class="r" style="left:50px;top:701px;width:1650px;height:1px;background:rgba(0,0,0,0.13);"></div>
<div class="r" style="left:50px;top:616px;width:1px;height:85px;background:rgba(0,0,0,0.13);"></div>
<div class="r" style="left:237px;top:616px;width:2px;height:85px;background:rgba(0,0,0,0.075);"></div>
<div class="r" style="left:363px;top:616px;width:2px;height:85px;background:rgba(0,0,0,0.075);"></div>
<div class="r" style="left:455px;top:616px;width:1px;height:85px;background:rgba(0,0,0,0.13);"></div>
<div class="r" style="left:581px;top:616px;width:2px;height:85px;background:rgba(0,0,0,0.075);"></div>
<div class="r" style="left:660px;top:616px;width:1px;height:85px;background:rgba(0,0,0,0.13);"></div>
<div class="r" style="left:737px;top:616px;width:2px;height:85px;background:rgba(0,0,0,0.075);"></div>
<div class="r" style="left:801px;top:616px;width:2px;height:85px;background:rgba(0,0,0,0.075);"></div>
<div class="r" style="left:867px;top:616px;width:2px;height:85px;background:rgba(0,0,0,0.075);"></div>
<div class="r" style="left:932px;top:616px;width:2px;height:85px;background:rgba(0,0,0,0.075);"></div>
<div class="r" style="left:996px;top:616px;width:2px;height:85px;background:rgba(0,0,0,0.075);"></div>
<div class="r" style="left:1062px;top:616px;width:2px;height:85px;background:rgba(0,0,0,0.075);"></div>
<div class="r" style="left:1127px;top:616px;width:2px;height:85px;background:rgba(0,0,0,0.075);"></div>
<div class="r" style="left:1194px;top:616px;width:1px;height:85px;background:rgba(0,0,0,0.13);"></div>
<div class="r" style="left:1259px;top:616px;width:1px;height:85px;background:rgba(0,0,0,0.13);"></div>
<div class="r" style="left:1336px;top:616px;width:2px;height:85px;background:rgba(0,0,0,0.075);"></div>
<div class="r" style="left:1415px;top:616px;width:1px;height:85px;background:rgba(0,0,0,0.13);"></div>
<div class="r" style="left:1492px;top:616px;width:2px;height:85px;background:rgba(0,0,0,0.075);"></div>
<div class="r" style="left:1570px;top:616px;width:1px;height:85px;background:rgba(0,0,0,0.13);"></div>
<div class="t" style="left:51px;width:187px;text-align:center;top:632.12px;font-size:21px;line-height:21px;color:#333333;font-weight:normal;letter-spacing:1.1px;text-indent:1.1px;">2022-11-22</div>
<div class="t" style="left:51px;width:187px;text-align:center;top:661.92px;font-size:21px;line-height:21px;color:#333333;font-weight:normal;letter-spacing:1.35px;text-indent:1.35px;">14:51:41</div>
<div class="t" style="left:238px;width:126px;text-align:center;top:647.12px;font-size:21px;line-height:21px;color:#fff;font-weight:normal;letter-spacing:0px;text-indent:0px;">ON</div>
<div class="t" style="left:364px;width:91px;text-align:center;top:647.12px;font-size:21px;line-height:21px;color:#333333;font-weight:normal;letter-spacing:0.7px;text-indent:0.7px;">Normal</div>
<svg class="r" style="left:465px;top:624.70px" width="110" height="68" viewBox="0 0 110 68">
<path d="M16.15 6.6 L12.52 12.29 A4.3 4.3 0 1 0 19.78 12.29 Z" fill="#8e5a2a" stroke="#000" stroke-width="1.5" stroke-linejoin="round"/>
<path d="M7.6 21.7 Q10.55 25.2 13.5 21.7 Q16.2 25.2 18.9 21.7 Q21.8 25.2 24.6 21.7 V29.2 H7.6 Z" fill="#8e5a2a"/>
<path d="M7.6 21.7 Q10.55 25.2 13.5 21.7 Q16.2 25.2 18.9 21.7 Q21.8 25.2 24.6 21.7" fill="none" stroke="#000" stroke-width="1.3" stroke-linejoin="round"/>
<path d="M4.2 14.3 Q6.6 13.6 7.1 15.6 V28 Q7.1 30.1 9.3 30.1 H22.9 Q25.1 30.1 25.1 28 V15.6 Q25.6 13.6 27.9 14.2" fill="none" stroke="#000" stroke-width="1.65" stroke-linecap="round" stroke-linejoin="round"/>
<path d="M41.1 4.6 L32.37 16.82 A10.7 10.7 0 1 0 49.83 16.82 Z" fill="#4a90e2" stroke="#000" stroke-width="2.5" stroke-linejoin="miter" stroke-miterlimit="10"/>
<g stroke="#fff" stroke-width="1.15" stroke-linecap="round" fill="none"><path d="M41.20 23.20 L41.20 16.50 M41.20 23.20 L47.00 19.85 M41.20 23.20 L47.00 26.55 M41.20 23.20 L41.20 29.90 M41.20 23.20 L35.40 26.55 M41.20 23.20 L35.40 19.85"/><path stroke-width="0.95" d="M41.20 18.38 L39.97 16.80 M41.20 18.38 L42.43 16.80 M45.38 20.79 L46.13 18.93 M45.38 20.79 L47.36 21.07 M45.38 25.61 L47.36 25.33 M45.38 25.61 L46.13 27.47 M41.20 28.02 L42.43 29.60 M41.20 28.02 L39.97 29.60 M37.02 25.61 L36.27 27.47 M37.02 25.61 L35.04 25.33 M37.02 20.79 L35.04 21.07 M37.02 20.79 L36.27 18.93"/></g>
<path d="M55.1 8.9 H59.2 V6.3 H73.1 V8.9 H79 V31.1 H55.1 Z" fill="#fff" stroke="#000" stroke-width="1.95"/>
<path d="M59.5 13.7 L72.9 26.3 M72.9 13.7 L59.5 26.3" stroke="#000" stroke-width="2.1"/>
<path d="M79 8.9 H84.2 V6.3 H98 V8.9 H102.8 V31.1 H79 Z" fill="#fff" stroke="#000" stroke-width="1.95"/>
<path d="M79 8.9 V31.1" stroke="#000" stroke-width="3.7"/>
<ellipse cx="88.7" cy="25.5" rx="3.2" ry="2.3" transform="rotate(-25 88.7 25.5)" fill="#000"/>
<path d="M91.7 25 V10.6" fill="none" stroke="#000" stroke-width="1.2"/>
<path d="M91.1 10.4 C92 13.2 96.6 14.2 95.9 18.6 C95.4 16.4 93.6 15.4 91.1 15 Z" fill="#000"/>
<path d="M42.2 41.45 H46.95 V38.5 H60.7 V41.45 H65.1 V64.0 H42.2 Z" fill="#fff" stroke="#000" stroke-width="1.95"/>
<path d="M45.1 44.9 H62 L60 49 H45.1 Z" fill="#d6d6d6"/>
<path d="M45.1 50.5 H59 L57.3 54.2 H45.1 Z" fill="#d6d6d6"/>
<path d="M45.1 55.8 H56 L54.1 60.2 H45.1 Z" fill="#4a90e2"/>
</svg>
<div class="t" style="left:582px;width:79px;text-align:center;top:647.12px;font-size:21px;line-height:21px;color:#333333;font-weight:normal;letter-spacing:-0.2px;text-indent:-0.2px;">Cool</div>
<div class="t" style="left:661px;width:77px;text-align:center;top:647.12px;font-size:21px;line-height:21px;color:#333333;font-weight:normal;letter-spacing:0.7px;text-indent:0.7px;">170.6</div>
<div class="t" style="left:738px;width:64px;text-align:center;top:647.12px;font-size:21px;line-height:21px;color:#333333;font-weight:normal;letter-spacing:0.7px;text-indent:0.7px;">-0.4</div>
<div class="t" style="left:802px;width:66px;text-align:center;top:647.12px;font-size:21px;line-height:21px;color:#333333;font-weight:normal;letter-spacing:0.7px;text-indent:0.7px;">77.0</div>
<div class="t" style="left:868px;width:65px;text-align:center;top:647.12px;font-size:21px;line-height:21px;color:#333333;font-weight:normal;letter-spacing:0.7px;text-indent:0.7px;">60.8</div>
<div class="t" style="left:933px;width:64px;text-align:center;top:647.12px;font-size:21px;line-height:21px;color:#333333;font-weight:normal;letter-spacing:0.7px;text-indent:0.7px;">-0.4</div>
<div class="t" style="left:997px;width:66px;text-align:center;top:647.12px;font-size:21px;line-height:21px;color:#333333;font-weight:normal;letter-spacing:0.7px;text-indent:0.7px;">89.6</div>
<div class="t" style="left:1063px;width:65px;text-align:center;top:647.12px;font-size:21px;line-height:21px;color:#333333;font-weight:normal;letter-spacing:0.7px;text-indent:0.7px;">66.2</div>
<div class="t" style="left:1128px;width:66.5px;text-align:center;top:647.12px;font-size:21px;line-height:21px;color:#333333;font-weight:normal;letter-spacing:0.7px;text-indent:0.7px;">77.0</div>
<div class="t" style="left:1194.5px;width:65.0px;text-align:center;top:647.12px;font-size:21px;line-height:21px;color:#333333;font-weight:normal;letter-spacing:0.7px;text-indent:0.7px;">69.8</div>
<div class="t" style="left:1259.5px;width:77.5px;text-align:center;top:647.12px;font-size:21px;line-height:21px;color:#333333;font-weight:normal;letter-spacing:0.7px;text-indent:0.7px;">163.4</div>
<div class="t" style="left:1337px;width:78.5px;text-align:center;top:647.12px;font-size:21px;line-height:21px;color:#333333;font-weight:normal;letter-spacing:0.7px;text-indent:0.7px;">-0.4</div>
<div class="t" style="left:1415.5px;width:77.5px;text-align:center;top:647.12px;font-size:21px;line-height:21px;color:#333333;font-weight:normal;letter-spacing:0.7px;text-indent:0.7px;">-</div>
<div class="t" style="left:1493px;width:77.5px;text-align:center;top:647.12px;font-size:21px;line-height:21px;color:#333333;font-weight:normal;letter-spacing:0.7px;text-indent:0.7px;">-</div>
<div class="r" style="left:239px;top:702px;width:125px;height:86px;background:#437012;"></div>
<div class="r" style="left:582px;top:702px;width:78px;height:86px;background:#99ccff;"></div>
<div class="r" style="left:50px;top:787px;width:1650px;height:1px;background:rgba(0,0,0,0.13);"></div>
<div class="r" style="left:50px;top:702px;width:1px;height:85px;background:rgba(0,0,0,0.13);"></div>
<div class="r" style="left:237px;top:702px;width:2px;height:85px;background:rgba(0,0,0,0.075);"></div>
<div class="r" style="left:363px;top:702px;width:2px;height:85px;background:rgba(0,0,0,0.075);"></div>
<div class="r" style="left:455px;top:702px;width:1px;height:85px;background:rgba(0,0,0,0.13);"></div>
<div class="r" style="left:581px;top:702px;width:2px;height:85px;background:rgba(0,0,0,0.075);"></div>
<div class="r" style="left:660px;top:702px;width:1px;height:85px;background:rgba(0,0,0,0.13);"></div>
<div class="r" style="left:737px;top:702px;width:2px;height:85px;background:rgba(0,0,0,0.075);"></div>
<div class="r" style="left:801px;top:702px;width:2px;height:85px;background:rgba(0,0,0,0.075);"></div>
<div class="r" style="left:867px;top:702px;width:2px;height:85px;background:rgba(0,0,0,0.075);"></div>
<div class="r" style="left:932px;top:702px;width:2px;height:85px;background:rgba(0,0,0,0.075);"></div>
<div class="r" style="left:996px;top:702px;width:2px;height:85px;background:rgba(0,0,0,0.075);"></div>
<div class="r" style="left:1062px;top:702px;width:2px;height:85px;background:rgba(0,0,0,0.075);"></div>
<div class="r" style="left:1127px;top:702px;width:2px;height:85px;background:rgba(0,0,0,0.075);"></div>
<div class="r" style="left:1194px;top:702px;width:1px;height:85px;background:rgba(0,0,0,0.13);"></div>
<div class="r" style="left:1259px;top:702px;width:1px;height:85px;background:rgba(0,0,0,0.13);"></div>
<div class="r" style="left:1336px;top:702px;width:2px;height:85px;background:rgba(0,0,0,0.075);"></div>
<div class="r" style="left:1415px;top:702px;width:1px;height:85px;background:rgba(0,0,0,0.13);"></div>
<div class="r" style="left:1492px;top:702px;width:2px;height:85px;background:rgba(0,0,0,0.075);"></div>
<div class="r" style="left:1570px;top:702px;width:1px;height:85px;background:rgba(0,0,0,0.13);"></div>
<div class="t" style="left:51px;width:187px;text-align:center;top:718.12px;font-size:21px;line-height:21px;color:#333333;font-weight:normal;letter-spacing:1.1px;text-indent:1.1px;">2022-11-22</div>
<div class="t" style="left:51px;width:187px;text-align:center;top:747.92px;font-size:21px;line-height:21px;color:#333333;font-weight:normal;letter-spacing:1.35px;text-indent:1.35px;">14:41:40</div>
<div class="t" style="left:238px;width:126px;text-align:center;top:733.12px;font-size:21px;line-height:21px;color:#fff;font-weight:normal;letter-spacing:0px;text-indent:0px;">ON</div>
<div class="t" style="left:364px;width:91px;text-align:center;top:733.12px;font-size:21px;line-height:21px;color:#333333;font-weight:normal;letter-spacing:0.7px;text-indent:0.7px;">Normal</div>
<svg class="r" style="left:465px;top:710.70px" width="110" height="68" viewBox="0 0 110 68">
<path d="M16.15 6.6 L12.52 12.29 A4.3 4.3 0 1 0 19.78 12.29 Z" fill="#8e5a2a" stroke="#000" stroke-width="1.5" stroke-linejoin="round"/>
<path d="M7.6 21.7 Q10.55 25.2 13.5 21.7 Q16.2 25.2 18.9 21.7 Q21.8 25.2 24.6 21.7 V29.2 H7.6 Z" fill="#8e5a2a"/>
<path d="M7.6 21.7 Q10.55 25.2 13.5 21.7 Q16.2 25.2 18.9 21.7 Q21.8 25.2 24.6 21.7" fill="none" stroke="#000" stroke-width="1.3" stroke-linejoin="round"/>
<path d="M4.2 14.3 Q6.6 13.6 7.1 15.6 V28 Q7.1 30.1 9.3 30.1 H22.9 Q25.1 30.1 25.1 28 V15.6 Q25.6 13.6 27.9 14.2" fill="none" stroke="#000" stroke-width="1.65" stroke-linecap="round" stroke-linejoin="round"/>
<path d="M41.1 4.6 L32.37 16.82 A10.7 10.7 0 1 0 49.83 16.82 Z" fill="#4a90e2" stroke="#000" stroke-width="2.5" stroke-linejoin="miter" stroke-miterlimit="10"/>
<g stroke="#fff" stroke-width="1.15" stroke-linecap="round" fill="none"><path d="M41.20 23.20 L41.20 16.50 M41.20 23.20 L47.00 19.85 M41.20 23.20 L47.00 26.55 M41.20 23.20 L41.20 29.90 M41.20 23.20 L35.40 26.55 M41.20 23.20 L35.40 19.85"/><path stroke-width="0.95" d="M41.20 18.38 L39.97 16.80 M41.20 18.38 L42.43 16.80 M45.38 20.79 L46.13 18.93 M45.38 20.79 L47.36 21.07 M45.38 25.61 L47.36 25.33 M45.38 25.61 L46.13 27.47 M41.20 28.02 L42.43 29.60 M41.20 28.02 L39.97 29.60 M37.02 25.61 L36.27 27.47 M37.02 25.61 L35.04 25.33 M37.02 20.79 L35.04 21.07 M37.02 20.79 L36.27 18.93"/></g>
<path d="M55.1 8.9 H59.2 V6.3 H73.1 V8.9 H79 V31.1 H55.1 Z" fill="#fff" stroke="#000" stroke-width="1.95"/>
<path d="M59.5 13.7 L72.9 26.3 M72.9 13.7 L59.5 26.3" stroke="#000" stroke-width="2.1"/>
<path d="M79 8.9 H84.2 V6.3 H98 V8.9 H102.8 V31.1 H79 Z" fill="#fff" stroke="#000" stroke-width="1.95"/>
<path d="M79 8.9 V31.1" stroke="#000" stroke-width="3.7"/>
<ellipse cx="88.7" cy="25.5" rx="3.2" ry="2.3" transform="rotate(-25 88.7 25.5)" fill="#000"/>
<path d="M91.7 25 V10.6" fill="none" stroke="#000" stroke-width="1.2"/>
<path d="M91.1 10.4 C92 13.2 96.6 14.2 95.9 18.6 C95.4 16.4 93.6 15.4 91.1 15 Z" fill="#000"/>
<path d="M42.2 41.45 H46.95 V38.5 H60.7 V41.45 H65.1 V64.0 H42.2 Z" fill="#fff" stroke="#000" stroke-width="1.95"/>
<path d="M45.1 44.9 H62 L60 49 H45.1 Z" fill="#d6d6d6"/>
<path d="M45.1 50.5 H59 L57.3 54.2 H45.1 Z" fill="#d6d6d6"/>
<path d="M45.1 55.8 H56 L54.1 60.2 H45.1 Z" fill="#4a90e2"/>
</svg>
<div class="t" style="left:582px;width:79px;text-align:center;top:733.12px;font-size:21px;line-height:21px;color:#333333;font-weight:normal;letter-spacing:-0.2px;text-indent:-0.2px;">Cool</div>
<div class="t" style="left:661px;width:77px;text-align:center;top:733.12px;font-size:21px;line-height:21px;color:#333333;font-weight:normal;letter-spacing:0.7px;text-indent:0.7px;">170.6</div>
<div class="t" style="left:738px;width:64px;text-align:center;top:733.12px;font-size:21px;line-height:21px;color:#333333;font-weight:normal;letter-spacing:0.7px;text-indent:0.7px;">-0.4</div>
<div class="t" style="left:802px;width:66px;text-align:center;top:733.12px;font-size:21px;line-height:21px;color:#333333;font-weight:normal;letter-spacing:0.7px;text-indent:0.7px;">77.0</div>
<div class="t" style="left:868px;width:65px;text-align:center;top:733.12px;font-size:21px;line-height:21px;color:#333333;font-weight:normal;letter-spacing:0.7px;text-indent:0.7px;">60.8</div>
<div class="t" style="left:933px;width:64px;text-align:center;top:733.12px;font-size:21px;line-height:21px;color:#333333;font-weight:normal;letter-spacing:0.7px;text-indent:0.7px;">-0.4</div>
<div class="t" style="left:997px;width:66px;text-align:center;top:733.12px;font-size:21px;line-height:21px;color:#333333;font-weight:normal;letter-spacing:0.7px;text-indent:0.7px;">89.6</div>
<div class="t" style="left:1063px;width:65px;text-align:center;top:733.12px;font-size:21px;line-height:21px;color:#333333;font-weight:normal;letter-spacing:0.7px;text-indent:0.7px;">66.2</div>
<div class="t" style="left:1128px;width:66.5px;text-align:center;top:733.12px;font-size:21px;line-height:21px;color:#333333;font-weight:normal;letter-spacing:0.7px;text-indent:0.7px;">77.0</div>
<div class="t" style="left:1194.5px;width:65.0px;text-align:center;top:733.12px;font-size:21px;line-height:21px;color:#333333;font-weight:normal;letter-spacing:0.7px;text-indent:0.7px;">69.8</div>
<div class="t" style="left:1259.5px;width:77.5px;text-align:center;top:733.12px;font-size:21px;line-height:21px;color:#333333;font-weight:normal;letter-spacing:0.7px;text-indent:0.7px;">163.4</div>
<div class="t" style="left:1337px;width:78.5px;text-align:center;top:733.12px;font-size:21px;line-height:21px;color:#333333;font-weight:normal;letter-spacing:0.7px;text-indent:0.7px;">-0.4</div>
<div class="t" style="left:1415.5px;width:77.5px;text-align:center;top:733.12px;font-size:21px;line-height:21px;color:#333333;font-weight:normal;letter-spacing:0.7px;text-indent:0.7px;">-</div>
<div class="t" style="left:1493px;width:77.5px;text-align:center;top:733.12px;font-size:21px;line-height:21px;color:#333333;font-weight:normal;letter-spacing:0.7px;text-indent:0.7px;">-</div>
<div class="r" style="left:239px;top:788px;width:125px;height:85px;background:#437012;"></div>
<div class="r" style="left:582px;top:788px;width:78px;height:85px;background:#99ccff;"></div>
<div class="r" style="left:50px;top:872px;width:1650px;height:1px;background:rgba(0,0,0,0.13);"></div>
<div class="r" style="left:50px;top:788px;width:1px;height:84px;background:rgba(0,0,0,0.13);"></div>
<div class="r" style="left:237px;top:788px;width:2px;height:84px;background:rgba(0,0,0,0.075);"></div>
<div class="r" style="left:363px;top:788px;width:2px;height:84px;background:rgba(0,0,0,0.075);"></div>
<div class="r" style="left:455px;top:788px;width:1px;height:84px;background:rgba(0,0,0,0.13);"></div>
<div class="r" style="left:581px;top:788px;width:2px;height:84px;background:rgba(0,0,0,0.075);"></div>
<div class="r" style="left:660px;top:788px;width:1px;height:84px;background:rgba(0,0,0,0.13);"></div>
<div class="r" style="left:737px;top:788px;width:2px;height:84px;background:rgba(0,0,0,0.075);"></div>
<div class="r" style="left:801px;top:788px;width:2px;height:84px;background:rgba(0,0,0,0.075);"></div>
<div class="r" style="left:867px;top:788px;width:2px;height:84px;background:rgba(0,0,0,0.075);"></div>
<div class="r" style="left:932px;top:788px;width:2px;height:84px;background:rgba(0,0,0,0.075);"></div>
<div class="r" style="left:996px;top:788px;width:2px;height:84px;background:rgba(0,0,0,0.075);"></div>
<div class="r" style="left:1062px;top:788px;width:2px;height:84px;background:rgba(0,0,0,0.075);"></div>
<div class="r" style="left:1127px;top:788px;width:2px;height:84px;background:rgba(0,0,0,0.075);"></div>
<div class="r" style="left:1194px;top:788px;width:1px;height:84px;background:rgba(0,0,0,0.13);"></div>
<div class="r" style="left:1259px;top:788px;width:1px;height:84px;background:rgba(0,0,0,0.13);"></div>
<div class="r" style="left:1336px;top:788px;width:2px;height:84px;background:rgba(0,0,0,0.075);"></div>
<div class="r" style="left:1415px;top:788px;width:1px;height:84px;background:rgba(0,0,0,0.13);"></div>
<div class="r" style="left:1492px;top:788px;width:2px;height:84px;background:rgba(0,0,0,0.075);"></div>
<div class="r" style="left:1570px;top:788px;width:1px;height:84px;background:rgba(0,0,0,0.13);"></div>
<div class="t" style="left:51px;width:187px;text-align:center;top:803.12px;font-size:21px;line-height:21px;color:#333333;font-weight:normal;letter-spacing:1.1px;text-indent:1.1px;">2022-11-22</div>
<div class="t" style="left:51px;width:187px;text-align:center;top:832.92px;font-size:21px;line-height:21px;color:#333333;font-weight:normal;letter-spacing:1.35px;text-indent:1.35px;">14:31:39</div>
<div class="t" style="left:238px;width:126px;text-align:center;top:818.12px;font-size:21px;line-height:21px;color:#fff;font-weight:normal;letter-spacing:0px;text-indent:0px;">ON</div>
<div class="t" style="left:364px;width:91px;text-align:center;top:818.12px;font-size:21px;line-height:21px;color:#333333;font-weight:normal;letter-spacing:0.7px;text-indent:0.7px;">Normal</div>
<svg class="r" style="left:465px;top:795.70px" width="110" height="68" viewBox="0 0 110 68">
<path d="M16.15 6.6 L12.52 12.29 A4.3 4.3 0 1 0 19.78 12.29 Z" fill="#8e5a2a" stroke="#000" stroke-width="1.5" stroke-linejoin="round"/>
<path d="M7.6 21.7 Q10.55 25.2 13.5 21.7 Q16.2 25.2 18.9 21.7 Q21.8 25.2 24.6 21.7 V29.2 H7.6 Z" fill="#8e5a2a"/>
<path d="M7.6 21.7 Q10.55 25.2 13.5 21.7 Q16.2 25.2 18.9 21.7 Q21.8 25.2 24.6 21.7" fill="none" stroke="#000" stroke-width="1.3" stroke-linejoin="round"/>
<path d="M4.2 14.3 Q6.6 13.6 7.1 15.6 V28 Q7.1 30.1 9.3 30.1 H22.9 Q25.1 30.1 25.1 28 V15.6 Q25.6 13.6 27.9 14.2" fill="none" stroke="#000" stroke-width="1.65" stroke-linecap="round" stroke-linejoin="round"/>
<path d="M41.1 4.6 L32.37 16.82 A10.7 10.7 0 1 0 49.83 16.82 Z" fill="#4a90e2" stroke="#000" stroke-width="2.5" stroke-linejoin="miter" stroke-miterlimit="10"/>
<g stroke="#fff" stroke-width="1.15" stroke-linecap="round" fill="none"><path d="M41.20 23.20 L41.20 16.50 M41.20 23.20 L47.00 19.85 M41.20 23.20 L47.00 26.55 M41.20 23.20 L41.20 29.90 M41.20 23.20 L35.40 26.55 M41.20 23.20 L35.40 19.85"/><path stroke-width="0.95" d="M41.20 18.38 L39.97 16.80 M41.20 18.38 L42.43 16.80 M45.38 20.79 L46.13 18.93 M45.38 20.79 L47.36 21.07 M45.38 25.61 L47.36 25.33 M45.38 25.61 L46.13 27.47 M41.20 28.02 L42.43 29.60 M41.20 28.02 L39.97 29.60 M37.02 25.61 L36.27 27.47 M37.02 25.61 L35.04 25.33 M37.02 20.79 L35.04 21.07 M37.02 20.79 L36.27 18.93"/></g>
<path d="M55.1 8.9 H59.2 V6.3 H73.1 V8.9 H79 V31.1 H55.1 Z" fill="#fff" stroke="#000" stroke-width="1.95"/>
<path d="M59.5 13.7 L72.9 26.3 M72.9 13.7 L59.5 26.3" stroke="#000" stroke-width="2.1"/>
<path d="M79 8.9 H84.2 V6.3 H98 V8.9 H102.8 V31.1 H79 Z" fill="#fff" stroke="#000" stroke-width="1.95"/>
<path d="M79 8.9 V31.1" stroke="#000" stroke-width="3.7"/>
<ellipse cx="88.7" cy="25.5" rx="3.2" ry="2.3" transform="rotate(-25 88.7 25.5)" fill="#000"/>
<path d="M91.7 25 V10.6" fill="none" stroke="#000" stroke-width="1.2"/>
<path d="M91.1 10.4 C92 13.2 96.6 14.2 95.9 18.6 C95.4 16.4 93.6 15.4 91.1 15 Z" fill="#000"/>
<path d="M42.2 41.45 H46.95 V38.5 H60.7 V41.45 H65.1 V64.0 H42.2 Z" fill="#fff" stroke="#000" stroke-width="1.95"/>
<path d="M45.1 44.9 H62 L60 49 H45.1 Z" fill="#d6d6d6"/>
<path d="M45.1 50.5 H59 L57.3 54.2 H45.1 Z" fill="#d6d6d6"/>
<path d="M45.1 55.8 H56 L54.1 60.2 H45.1 Z" fill="#4a90e2"/>
</svg>
<div class="t" style="left:582px;width:79px;text-align:center;top:818.12px;font-size:21px;line-height:21px;color:#333333;font-weight:normal;letter-spacing:-0.2px;text-indent:-0.2px;">Cool</div>
<div class="t" style="left:661px;width:77px;text-align:center;top:818.12px;font-size:21px;line-height:21px;color:#333333;font-weight:normal;letter-spacing:0.7px;text-indent:0.7px;">170.6</div>
<div class="t" style="left:738px;width:64px;text-align:center;top:818.12px;font-size:21px;line-height:21px;color:#333333;font-weight:normal;letter-spacing:0.7px;text-indent:0.7px;">-0.4</div>
<div class="t" style="left:802px;width:66px;text-align:center;top:818.12px;font-size:21px;line-height:21px;color:#333333;font-weight:normal;letter-spacing:0.7px;text-indent:0.7px;">77.0</div>
<div class="t" style="left:868px;width:65px;text-align:center;top:818.12px;font-size:21px;line-height:21px;color:#333333;font-weight:normal;letter-spacing:0.7px;text-indent:0.7px;">60.8</div>
<div class="t" style="left:933px;width:64px;text-align:center;top:818.12px;font-size:21px;line-height:21px;color:#333333;font-weight:normal;letter-spacing:0.7px;text-indent:0.7px;">-0.4</div>
<div class="t" style="left:997px;width:66px;text-align:center;top:818.12px;font-size:21px;line-height:21px;color:#333333;font-weight:normal;letter-spacing:0.7px;text-indent:0.7px;">89.6</div>
<div class="t" style="left:1063px;width:65px;text-align:center;top:818.12px;font-size:21px;line-height:21px;color:#333333;font-weight:normal;letter-spacing:0.7px;text-indent:0.7px;">66.2</div>
<div class="t" style="left:1128px;width:66.5px;text-align:center;top:818.12px;font-size:21px;line-height:21px;color:#333333;font-weight:normal;letter-spacing:0.7px;text-indent:0.7px;">77.0</div>
<div class="t" style="left:1194.5px;width:65.0px;text-align:center;top:818.12px;font-size:21px;line-height:21px;color:#333333;font-weight:normal;letter-spacing:0.7px;text-indent:0.7px;">69.8</div>
<div class="t" style="left:1259.5px;width:77.5px;text-align:center;top:818.12px;font-size:21px;line-height:21px;color:#333333;font-weight:normal;letter-spacing:0.7px;text-indent:0.7px;">163.4</div>
<div class="t" style="left:1337px;width:78.5px;text-align:center;top:818.12px;font-size:21px;line-height:21px;color:#333333;font-weight:normal;letter-spacing:0.7px;text-indent:0.7px;">-0.4</div>
<div class="t" style="left:1415.5px;width:77.5px;text-align:center;top:818.12px;font-size:21px;line-height:21px;color:#333333;font-weight:normal;letter-spacing:0.7px;text-indent:0.7px;">-</div>
<div class="t" style="left:1493px;width:77.5px;text-align:center;top:818.12px;font-size:21px;line-height:21px;color:#333333;font-weight:normal;letter-spacing:0.7px;text-indent:0.7px;">-</div>
<div class="r" style="left:239px;top:873px;width:125px;height:86px;background:#437012;"></div>
<div class="r" style="left:582px;top:873px;width:78px;height:86px;background:#99ccff;"></div>
<div class="r" style="left:50px;top:958px;width:1650px;height:1px;background:rgba(0,0,0,0.13);"></div>
<div class="r" style="left:50px;top:873px;width:1px;height:85px;background:rgba(0,0,0,0.13);"></div>
<div class="r" style="left:237px;top:873px;width:2px;height:85px;background:rgba(0,0,0,0.075);"></div>
<div class="r" style="left:363px;top:873px;width:2px;height:85px;background:rgba(0,0,0,0.075);"></div>
<div class="r" style="left:455px;top:873px;width:1px;height:85px;background:rgba(0,0,0,0.13);"></div>
<div class="r" style="left:581px;top:873px;width:2px;height:85px;background:rgba(0,0,0,0.075);"></div>
<div class="r" style="left:660px;top:873px;width:1px;height:85px;background:rgba(0,0,0,0.13);"></div>
<div class="r" style="left:737px;top:873px;width:2px;height:85px;background:rgba(0,0,0,0.075);"></div>
<div class="r" style="left:801px;top:873px;width:2px;height:85px;background:rgba(0,0,0,0.075);"></div>
<div class="r" style="left:867px;top:873px;width:2px;height:85px;background:rgba(0,0,0,0.075);"></div>
<div class="r" style="left:932px;top:873px;width:2px;height:85px;background:rgba(0,0,0,0.075);"></div>
<div class="r" style="left:996px;top:873px;width:2px;height:85px;background:rgba(0,0,0,0.075);"></div>
<div class="r" style="left:1062px;top:873px;width:2px;height:85px;background:rgba(0,0,0,0.075);"></div>
<div class="r" style="left:1127px;top:873px;width:2px;height:85px;background:rgba(0,0,0,0.075);"></div>
<div class="r" style="left:1194px;top:873px;width:1px;height:85px;background:rgba(0,0,0,0.13);"></div>
<div class="r" style="left:1259px;top:873px;width:1px;height:85px;background:rgba(0,0,0,0.13);"></div>
<div class="r" style="left:1336px;top:873px;width:2px;height:85px;background:rgba(0,0,0,0.075);"></div>
<div class="r" style="left:1415px;top:873px;width:1px;height:85px;background:rgba(0,0,0,0.13);"></div>
<div class="r" style="left:1492px;top:873px;width:2px;height:85px;background:rgba(0,0,0,0.075);"></div>
<div class="r" style="left:1570px;top:873px;width:1px;height:85px;background:rgba(0,0,0,0.13);"></div>
<div class="t" style="left:51px;width:187px;text-align:center;top:889.12px;font-size:21px;line-height:21px;color:#333333;font-weight:normal;letter-spacing:1.1px;text-indent:1.1px;">2022-11-22</div>
<div class="t" style="left:51px;width:187px;text-align:center;top:918.92px;font-size:21px;line-height:21px;color:#333333;font-weight:normal;letter-spacing:1.35px;text-indent:1.35px;">14:21:38</div>
<div class="t" style="left:238px;width:126px;text-align:center;top:904.12px;font-size:21px;line-height:21px;color:#fff;font-weight:normal;letter-spacing:0px;text-indent:0px;">ON</div>
<div class="t" style="left:364px;width:91px;text-align:center;top:904.12px;font-size:21px;line-height:21px;color:#333333;font-weight:normal;letter-spacing:0.7px;text-indent:0.7px;">Normal</div>
<svg class="r" style="left:465px;top:881.70px" width="110" height="68" viewBox="0 0 110 68">
<path d="M16.15 6.6 L12.52 12.29 A4.3 4.3 0 1 0 19.78 12.29 Z" fill="#8e5a2a" stroke="#000" stroke-width="1.5" stroke-linejoin="round"/>
<path d="M7.6 21.7 Q10.55 25.2 13.5 21.7 Q16.2 25.2 18.9 21.7 Q21.8 25.2 24.6 21.7 V29.2 H7.6 Z" fill="#8e5a2a"/>
<path d="M7.6 21.7 Q10.55 25.2 13.5 21.7 Q16.2 25.2 18.9 21.7 Q21.8 25.2 24.6 21.7" fill="none" stroke="#000" stroke-width="1.3" stroke-linejoin="round"/>
<path d="M4.2 14.3 Q6.6 13.6 7.1 15.6 V28 Q7.1 30.1 9.3 30.1 H22.9 Q25.1 30.1 25.1 28 V15.6 Q25.6 13.6 27.9 14.2" fill="none" stroke="#000" stroke-width="1.65" stroke-linecap="round" stroke-linejoin="round"/>
<path d="M41.1 4.6 L32.37 16.82 A10.7 10.7 0 1 0 49.83 16.82 Z" fill="#4a90e2" stroke="#000" stroke-width="2.5" stroke-linejoin="miter" stroke-miterlimit="10"/>
<g stroke="#fff" stroke-width="1.15" stroke-linecap="round" fill="none"><path d="M41.20 23.20 L41.20 16.50 M41.20 23.20 L47.00 19.85 M41.20 23.20 L47.00 26.55 M41.20 23.20 L41.20 29.90 M41.20 23.20 L35.40 26.55 M41.20 23.20 L35.40 19.85"/><path stroke-width="0.95" d="M41.20 18.38 L39.97 16.80 M41.20 18.38 L42.43 16.80 M45.38 20.79 L46.13 18.93 M45.38 20.79 L47.36 21.07 M45.38 25.61 L47.36 25.33 M45.38 25.61 L46.13 27.47 M41.20 28.02 L42.43 29.60 M41.20 28.02 L39.97 29.60 M37.02 25.61 L36.27 27.47 M37.02 25.61 L35.04 25.33 M37.02 20.79 L35.04 21.07 M37.02 20.79 L36.27 18.93"/></g>
<path d="M55.1 8.9 H59.2 V6.3 H73.1 V8.9 H79 V31.1 H55.1 Z" fill="#fff" stroke="#000" stroke-width="1.95"/>
<path d="M59.5 13.7 L72.9 26.3 M72.9 13.7 L59.5 26.3" stroke="#000" stroke-width="2.1"/>
<path d="M79 8.9 H84.2 V6.3 H98 V8.9 H102.8 V31.1 H79 Z" fill="#fff" stroke="#000" stroke-width="1.95"/>
<path d="M79 8.9 V31.1" stroke="#000" stroke-width="3.7"/>
<ellipse cx="88.7" cy="25.5" rx="3.2" ry="2.3" transform="rotate(-25 88.7 25.5)" fill="#000"/>
<path d="M91.7 25 V10.6" fill="none" stroke="#000" stroke-width="1.2"/>
<path d="M91.1 10.4 C92 13.2 96.6 14.2 95.9 18.6 C95.4 16.4 93.6 15.4 91.1 15 Z" fill="#000"/>
<path d="M42.2 41.45 H46.95 V38.5 H60.7 V41.45 H65.1 V64.0 H42.2 Z" fill="#fff" stroke="#000" stroke-width="1.95"/>
<path d="M45.1 44.9 H62 L60 49 H45.1 Z" fill="#d6d6d6"/>
<path d="M45.1 50.5 H59 L57.3 54.2 H45.1 Z" fill="#d6d6d6"/>
<path d="M45.1 55.8 H56 L54.1 60.2 H45.1 Z" fill="#4a90e2"/>
</svg>
<div class="t" style="left:582px;width:79px;text-align:center;top:904.12px;font-size:21px;line-height:21px;color:#333333;font-weight:normal;letter-spacing:-0.2px;text-indent:-0.2px;">Cool</div>
<div class="t" style="left:661px;width:77px;text-align:center;top:904.12px;font-size:21px;line-height:21px;color:#333333;font-weight:normal;letter-spacing:0.7px;text-indent:0.7px;">170.6</div>
<div class="t" style="left:738px;width:64px;text-align:center;top:904.12px;font-size:21px;line-height:21px;color:#333333;font-weight:normal;letter-spacing:0.7px;text-indent:0.7px;">-0.4</div>
<div class="t" style="left:802px;width:66px;text-align:center;top:904.12px;font-size:21px;line-height:21px;color:#333333;font-weight:normal;letter-spacing:0.7px;text-indent:0.7px;">77.0</div>
<div class="t" style="left:868px;width:65px;text-align:center;top:904.12px;font-size:21px;line-height:21px;color:#333333;font-weight:normal;letter-spacing:0.7px;text-indent:0.7px;">60.8</div>
<div class="t" style="left:933px;width:64px;text-align:center;top:904.12px;font-size:21px;line-height:21px;color:#333333;font-weight:normal;letter-spacing:0.7px;text-indent:0.7px;">-0.4</div>
<div class="t" style="left:997px;width:66px;text-align:center;top:904.12px;font-size:21px;line-height:21px;color:#333333;font-weight:normal;letter-spacing:0.7px;text-indent:0.7px;">89.6</div>
<div class="t" style="left:1063px;width:65px;text-align:center;top:904.12px;font-size:21px;line-height:21px;color:#333333;font-weight:normal;letter-spacing:0.7px;text-indent:0.7px;">66.2</div>
<div class="t" style="left:1128px;width:66.5px;text-align:center;top:904.12px;font-size:21px;line-height:21px;color:#333333;font-weight:normal;letter-spacing:0.7px;text-indent:0.7px;">77.0</div>
<div class="t" style="left:1194.5px;width:65.0px;text-align:center;top:904.12px;font-size:21px;line-height:21px;color:#333333;font-weight:normal;letter-spacing:0.7px;text-indent:0.7px;">69.8</div>
<div class="t" style="left:1259.5px;width:77.5px;text-align:center;top:904.12px;font-size:21px;line-height:21px;color:#333333;font-weight:normal;letter-spacing:0.7px;text-indent:0.7px;">163.4</div>
<div class="t" style="left:1337px;width:78.5px;text-align:center;top:904.12px;font-size:21px;line-height:21px;color:#333333;font-weight:normal;letter-spacing:0.7px;text-indent:0.7px;">-0.4</div>
<div class="t" style="left:1415.5px;width:77.5px;text-align:center;top:904.12px;font-size:21px;line-height:21px;color:#333333;font-weight:normal;letter-spacing:0.7px;text-indent:0.7px;">-</div>
<div class="t" style="left:1493px;width:77.5px;text-align:center;top:904.12px;font-size:21px;line-height:21px;color:#333333;font-weight:normal;letter-spacing:0.7px;text-indent:0.7px;">-</div>
<div class="r" style="left:239px;top:959px;width:125px;height:86px;background:#437012;"></div>
<div class="r" style="left:582px;top:959px;width:78px;height:86px;background:#99ccff;"></div>
<div class="r" style="left:50px;top:1044px;width:1650px;height:1px;background:rgba(0,0,0,0.13);"></div>
<div class="r" style="left:50px;top:959px;width:1px;height:85px;background:rgba(0,0,0,0.13);"></div>
<div class="r" style="left:237px;top:959px;width:2px;height:85px;background:rgba(0,0,0,0.075);"></div>
<div class="r" style="left:363px;top:959px;width:2px;height:85px;background:rgba(0,0,0,0.075);"></div>
<div class="r" style="left:455px;top:959px;width:1px;height:85px;background:rgba(0,0,0,0.13);"></div>
<div class="r" style="left:581px;top:959px;width:2px;height:85px;background:rgba(0,0,0,0.075);"></div>
<div class="r" style="left:660px;top:959px;width:1px;height:85px;background:rgba(0,0,0,0.13);"></div>
<div class="r" style="left:737px;top:959px;width:2px;height:85px;background:rgba(0,0,0,0.075);"></div>
<div class="r" style="left:801px;top:959px;width:2px;height:85px;background:rgba(0,0,0,0.075);"></div>
<div class="r" style="left:867px;top:959px;width:2px;height:85px;background:rgba(0,0,0,0.075);"></div>
<div class="r" style="left:932px;top:959px;width:2px;height:85px;background:rgba(0,0,0,0.075);"></div>
<div class="r" style="left:996px;top:959px;width:2px;height:85px;background:rgba(0,0,0,0.075);"></div>
<div class="r" style="left:1062px;top:959px;width:2px;height:85px;background:rgba(0,0,0,0.075);"></div>
<div class="r" style="left:1127px;top:959px;width:2px;height:85px;background:rgba(0,0,0,0.075);"></div>
<div class="r" style="left:1194px;top:959px;width:1px;height:85px;background:rgba(0,0,0,0.13);"></div>
<div class="r" style="left:1259px;top:959px;width:1px;height:85px;background:rgba(0,0,0,0.13);"></div>
<div class="r" style="left:1336px;top:959px;width:2px;height:85px;background:rgba(0,0,0,0.075);"></div>
<div class="r" style="left:1415px;top:959px;width:1px;height:85px;background:rgba(0,0,0,0.13);"></div>
<div class="r" style="left:1492px;top:959px;width:2px;height:85px;background:rgba(0,0,0,0.075);"></div>
<div class="r" style="left:1570px;top:959px;width:1px;height:85px;background:rgba(0,0,0,0.13);"></div>
<div class="t" style="left:51px;width:187px;text-align:center;top:975.12px;font-size:21px;line-height:21px;color:#333333;font-weight:normal;letter-spacing:1.1px;text-indent:1.1px;">2022-11-22</div>
<div class="t" style="left:51px;width:187px;text-align:center;top:1004.92px;font-size:21px;line-height:21px;color:#333333;font-weight:normal;letter-spacing:1.35px;text-indent:1.35px;">14:11:38</div>
<div class="t" style="left:238px;width:126px;text-align:center;top:990.12px;font-size:21px;line-height:21px;color:#fff;font-weight:normal;letter-spacing:0px;text-indent:0px;">ON</div>
<div class="t" style="left:364px;width:91px;text-align:center;top:990.12px;font-size:21px;line-height:21px;color:#333333;font-weight:normal;letter-spacing:0.7px;text-indent:0.7px;">Normal</div>
<svg class="r" style="left:465px;top:967.70px" width="110" height="68" viewBox="0 0 110 68">
<path d="M16.15 6.6 L12.52 12.29 A4.3 4.3 0 1 0 19.78 12.29 Z" fill="#8e5a2a" stroke="#000" stroke-width="1.5" stroke-linejoin="round"/>
<path d="M7.6 21.7 Q10.55 25.2 13.5 21.7 Q16.2 25.2 18.9 21.7 Q21.8 25.2 24.6 21.7 V29.2 H7.6 Z" fill="#8e5a2a"/>
<path d="M7.6 21.7 Q10.55 25.2 13.5 21.7 Q16.2 25.2 18.9 21.7 Q21.8 25.2 24.6 21.7" fill="none" stroke="#000" stroke-width="1.3" stroke-linejoin="round"/>
<path d="M4.2 14.3 Q6.6 13.6 7.1 15.6 V28 Q7.1 30.1 9.3 30.1 H22.9 Q25.1 30.1 25.1 28 V15.6 Q25.6 13.6 27.9 14.2" fill="none" stroke="#000" stroke-width="1.65" stroke-linecap="round" stroke-linejoin="round"/>
<path d="M41.1 4.6 L32.37 16.82 A10.7 10.7 0 1 0 49.83 16.82 Z" fill="#4a90e2" stroke="#000" stroke-width="2.5" stroke-linejoin="miter" stroke-miterlimit="10"/>
<g stroke="#fff" stroke-width="1.15" stroke-linecap="round" fill="none"><path d="M41.20 23.20 L41.20 16.50 M41.20 23.20 L47.00 19.85 M41.20 23.20 L47.00 26.55 M41.20 23.20 L41.20 29.90 M41.20 23.20 L35.40 26.55 M41.20 23.20 L35.40 19.85"/><path stroke-width="0.95" d="M41.20 18.38 L39.97 16.80 M41.20 18.38 L42.43 16.80 M45.38 20.79 L46.13 18.93 M45.38 20.79 L47.36 21.07 M45.38 25.61 L47.36 25.33 M45.38 25.61 L46.13 27.47 M41.20 28.02 L42.43 29.60 M41.20 28.02 L39.97 29.60 M37.02 25.61 L36.27 27.47 M37.02 25.61 L35.04 25.33 M37.02 20.79 L35.04 21.07 M37.02 20.79 L36.27 18.93"/></g>
<path d="M55.1 8.9 H59.2 V6.3 H73.1 V8.9 H79 V31.1 H55.1 Z" fill="#fff" stroke="#000" stroke-width="1.95"/>
<path d="M59.5 13.7 L72.9 26.3 M72.9 13.7 L59.5 26.3" stroke="#000" stroke-width="2.1"/>
<path d="M79 8.9 H84.2 V6.3 H98 V8.9 H102.8 V31.1 H79 Z" fill="#fff" stroke="#000" stroke-width="1.95"/>
<path d="M79 8.9 V31.1" stroke="#000" stroke-width="3.7"/>
<ellipse cx="88.7" cy="25.5" rx="3.2" ry="2.3" transform="rotate(-25 88.7 25.5)" fill="#000"/>
<path d="M91.7 25 V10.6" fill="none" stroke="#000" stroke-width="1.2"/>
<path d="M91.1 10.4 C92 13.2 96.6 14.2 95.9 18.6 C95.4 16.4 93.6 15.4 91.1 15 Z" fill="#000"/>
<path d="M42.2 41.45 H46.95 V38.5 H60.7 V41.45 H65.1 V64.0 H42.2 Z" fill="#fff" stroke="#000" stroke-width="1.95"/>
<path d="M45.1 44.9 H62 L60 49 H45.1 Z" fill="#d6d6d6"/>
<path d="M45.1 50.5 H59 L57.3 54.2 H45.1 Z" fill="#d6d6d6"/>
<path d="M45.1 55.8 H56 L54.1 60.2 H45.1 Z" fill="#4a90e2"/>
</svg>
<div class="t" style="left:582px;width:79px;text-align:center;top:990.12px;font-size:21px;line-height:21px;color:#333333;font-weight:normal;letter-spacing:-0.2px;text-indent:-0.2px;">Cool</div>
<div class="t" style="left:661px;width:77px;text-align:center;top:990.12px;font-size:21px;line-height:21px;color:#333333;font-weight:normal;letter-spacing:0.7px;text-indent:0.7px;">170.6</div>
<div class="t" style="left:738px;width:64px;text-align:center;top:990.12px;font-size:21px;line-height:21px;color:#333333;font-weight:normal;letter-spacing:0.7px;text-indent:0.7px;">-0.4</div>
<div class="t" style="left:802px;width:66px;text-align:center;top:990.12px;font-size:21px;line-height:21px;color:#333333;font-weight:normal;letter-spacing:0.7px;text-indent:0.7px;">77.0</div>
<div class="t" style="left:868px;width:65px;text-align:center;top:990.12px;font-size:21px;line-height:21px;color:#333333;font-weight:normal;letter-spacing:0.7px;text-indent:0.7px;">60.8</div>
<div class="t" style="left:933px;width:64px;text-align:center;top:990.12px;font-size:21px;line-height:21px;color:#333333;font-weight:normal;letter-spacing:0.7px;text-indent:0.7px;">-0.4</div>
<div class="t" style="left:997px;width:66px;text-align:center;top:990.12px;font-size:21px;line-height:21px;color:#333333;font-weight:normal;letter-spacing:0.7px;text-indent:0.7px;">89.6</div>
<div class="t" style="left:1063px;width:65px;text-align:center;top:990.12px;font-size:21px;line-height:21px;color:#333333;font-weight:normal;letter-spacing:0.7px;text-indent:0.7px;">66.2</div>
<div class="t" style="left:1128px;width:66.5px;text-align:center;top:990.12px;font-size:21px;line-height:21px;color:#333333;font-weight:normal;letter-spacing:0.7px;text-indent:0.7px;">77.0</div>
<div class="t" style="left:1194.5px;width:65.0px;text-align:center;top:990.12px;font-size:21px;line-height:21px;color:#333333;font-weight:normal;letter-spacing:0.7px;text-indent:0.7px;">69.8</div>
<div class="t" style="left:1259.5px;width:77.5px;text-align:center;top:990.12px;font-size:21px;line-height:21px;color:#333333;font-weight:normal;letter-spacing:0.7px;text-indent:0.7px;">163.4</div>
<div class="t" style="left:1337px;width:78.5px;text-align:center;top:990.12px;font-size:21px;line-height:21px;color:#333333;font-weight:normal;letter-spacing:0.7px;text-indent:0.7px;">-0.4</div>
<div class="t" style="left:1415.5px;width:77.5px;text-align:center;top:990.12px;font-size:21px;line-height:21px;color:#333333;font-weight:normal;letter-spacing:0.7px;text-indent:0.7px;">-</div>
<div class="t" style="left:1493px;width:77.5px;text-align:center;top:990.12px;font-size:21px;line-height:21px;color:#333333;font-weight:normal;letter-spacing:0.7px;text-indent:0.7px;">-</div>
<div class="r" style="left:239px;top:1045px;width:125px;height:86px;background:#437012;"></div>
<div class="r" style="left:582px;top:1045px;width:78px;height:86px;background:#99ccff;"></div>
<div class="r" style="left:50px;top:1130px;width:1650px;height:1px;background:rgba(0,0,0,0.13);"></div>
<div class="r" style="left:50px;top:1045px;width:1px;height:85px;background:rgba(0,0,0,0.13);"></div>
<div class="r" style="left:237px;top:1045px;width:2px;height:85px;background:rgba(0,0,0,0.075);"></div>
<div class="r" style="left:363px;top:1045px;width:2px;height:85px;background:rgba(0,0,0,0.075);"></div>
<div class="r" style="left:455px;top:1045px;width:1px;height:85px;background:rgba(0,0,0,0.13);"></div>
<div class="r" style="left:581px;top:1045px;width:2px;height:85px;background:rgba(0,0,0,0.075);"></div>
<div class="r" style="left:660px;top:1045px;width:1px;height:85px;background:rgba(0,0,0,0.13);"></div>
<div class="r" style="left:737px;top:1045px;width:2px;height:85px;background:rgba(0,0,0,0.075);"></div>
<div class="r" style="left:801px;top:1045px;width:2px;height:85px;background:rgba(0,0,0,0.075);"></div>
<div class="r" style="left:867px;top:1045px;width:2px;height:85px;background:rgba(0,0,0,0.075);"></div>
<div class="r" style="left:932px;top:1045px;width:2px;height:85px;background:rgba(0,0,0,0.075);"></div>
<div class="r" style="left:996px;top:1045px;width:2px;height:85px;background:rgba(0,0,0,0.075);"></div>
<div class="r" style="left:1062px;top:1045px;width:2px;height:85px;background:rgba(0,0,0,0.075);"></div>
<div class="r" style="left:1127px;top:1045px;width:2px;height:85px;background:rgba(0,0,0,0.075);"></div>
<div class="r" style="left:1194px;top:1045px;width:1px;height:85px;background:rgba(0,0,0,0.13);"></div>
<div class="r" style="left:1259px;top:1045px;width:1px;height:85px;background:rgba(0,0,0,0.13);"></div>
<div class="r" style="left:1336px;top:1045px;width:2px;height:85px;background:rgba(0,0,0,0.075);"></div>
<div class="r" style="left:1415px;top:1045px;width:1px;height:85px;background:rgba(0,0,0,0.13);"></div>
<div class="r" style="left:1492px;top:1045px;width:2px;height:85px;background:rgba(0,0,0,0.075);"></div>
<div class="r" style="left:1570px;top:1045px;width:1px;height:85px;background:rgba(0,0,0,0.13);"></div>
<div class="t" style="left:51px;width:187px;text-align:center;top:1061.12px;font-size:21px;line-height:21px;color:#333333;font-weight:normal;letter-spacing:1.1px;text-indent:1.1px;">2022-11-22</div>
<div class="t" style="left:51px;width:187px;text-align:center;top:1090.92px;font-size:21px;line-height:21px;color:#333333;font-weight:normal;letter-spacing:1.35px;text-indent:1.35px;">14:01:37</div>
<div class="t" style="left:238px;width:126px;text-align:center;top:1076.12px;font-size:21px;line-height:21px;color:#fff;font-weight:normal;letter-spacing:0px;text-indent:0px;">ON</div>
<div class="t" style="left:364px;width:91px;text-align:center;top:1076.12px;font-size:21px;line-height:21px;color:#333333;font-weight:normal;letter-spacing:0.7px;text-indent:0.7px;">Normal</div>
<svg class="r" style="left:465px;top:1053.70px" width="110" height="68" viewBox="0 0 110 68">
<path d="M16.15 6.6 L12.52 12.29 A4.3 4.3 0 1 0 19.78 12.29 Z" fill="#8e5a2a" stroke="#000" stroke-width="1.5" stroke-linejoin="round"/>
<path d="M7.6 21.7 Q10.55 25.2 13.5 21.7 Q16.2 25.2 18.9 21.7 Q21.8 25.2 24.6 21.7 V29.2 H7.6 Z" fill="#8e5a2a"/>
<path d="M7.6 21.7 Q10.55 25.2 13.5 21.7 Q16.2 25.2 18.9 21.7 Q21.8 25.2 24.6 21.7" fill="none" stroke="#000" stroke-width="1.3" stroke-linejoin="round"/>
<path d="M4.2 14.3 Q6.6 13.6 7.1 15.6 V28 Q7.1 30.1 9.3 30.1 H22.9 Q25.1 30.1 25.1 28 V15.6 Q25.6 13.6 27.9 14.2" fill="none" stroke="#000" stroke-width="1.65" stroke-linecap="round" stroke-linejoin="round"/>
<path d="M41.1 4.6 L32.37 16.82 A10.7 10.7 0 1 0 49.83 16.82 Z" fill="#4a90e2" stroke="#000" stroke-width="2.5" stroke-linejoin="miter" stroke-miterlimit="10"/>
<g stroke="#fff" stroke-width="1.15" stroke-linecap="round" fill="none"><path d="M41.20 23.20 L41.20 16.50 M41.20 23.20 L47.00 19.85 M41.20 23.20 L47.00 26.55 M41.20 23.20 L41.20 29.90 M41.20 23.20 L35.40 26.55 M41.20 23.20 L35.40 19.85"/><path stroke-width="0.95" d="M41.20 18.38 L39.97 16.80 M41.20 18.38 L42.43 16.80 M45.38 20.79 L46.13 18.93 M45.38 20.79 L47.36 21.07 M45.38 25.61 L47.36 25.33 M45.38 25.61 L46.13 27.47 M41.20 28.02 L42.43 29.60 M41.20 28.02 L39.97 29.60 M37.02 25.61 L36.27 27.47 M37.02 25.61 L35.04 25.33 M37.02 20.79 L35.04 21.07 M37.02 20.79 L36.27 18.93"/></g>
<path d="M55.1 8.9 H59.2 V6.3 H73.1 V8.9 H79 V31.1 H55.1 Z" fill="#fff" stroke="#000" stroke-width="1.95"/>
<path d="M59.5 13.7 L72.9 26.3 M72.9 13.7 L59.5 26.3" stroke="#000" stroke-width="2.1"/>
<path d="M79 8.9 H84.2 V6.3 H98 V8.9 H102.8 V31.1 H79 Z" fill="#fff" stroke="#000" stroke-width="1.95"/>
<path d="M79 8.9 V31.1" stroke="#000" stroke-width="3.7"/>
<ellipse cx="88.7" cy="25.5" rx="3.2" ry="2.3" transform="rotate(-25 88.7 25.5)" fill="#000"/>
<path d="M91.7 25 V10.6" fill="none" stroke="#000" stroke-width="1.2"/>
<path d="M91.1 10.4 C92 13.2 96.6 14.2 95.9 18.6 C95.4 16.4 93.6 15.4 91.1 15 Z" fill="#000"/>
<path d="M42.2 41.45 H46.95 V38.5 H60.7 V41.45 H65.1 V64.0 H42.2 Z" fill="#fff" stroke="#000" stroke-width="1.95"/>
<path d="M45.1 44.9 H62 L60 49 H45.1 Z" fill="#d6d6d6"/>
<path d="M45.1 50.5 H59 L57.3 54.2 H45.1 Z" fill="#d6d6d6"/>
<path d="M45.1 55.8 H56 L54.1 60.2 H45.1 Z" fill="#4a90e2"/>
</svg>
<div class="t" style="left:582px;width:79px;text-align:center;top:1076.12px;font-size:21px;line-height:21px;color:#333333;font-weight:normal;letter-spacing:-0.2px;text-indent:-0.2px;">Cool</div>
<div class="t" style="left:661px;width:77px;text-align:center;top:1076.12px;font-size:21px;line-height:21px;color:#333333;font-weight:normal;letter-spacing:0.7px;text-indent:0.7px;">170.6</div>
<div class="t" style="left:738px;width:64px;text-align:center;top:1076.12px;font-size:21px;line-height:21px;color:#333333;font-weight:normal;letter-spacing:0.7px;text-indent:0.7px;">-0.4</div>
<div class="t" style="left:802px;width:66px;text-align:center;top:1076.12px;font-size:21px;line-height:21px;color:#333333;font-weight:normal;letter-spacing:0.7px;text-indent:0.7px;">77.0</div>
<div class="t" style="left:868px;width:65px;text-align:center;top:1076.12px;font-size:21px;line-height:21px;color:#333333;font-weight:normal;letter-spacing:0.7px;text-indent:0.7px;">60.8</div>
<div class="t" style="left:933px;width:64px;text-align:center;top:1076.12px;font-size:21px;line-height:21px;color:#333333;font-weight:normal;letter-spacing:0.7px;text-indent:0.7px;">-0.4</div>
<div class="t" style="left:997px;width:66px;text-align:center;top:1076.12px;font-size:21px;line-height:21px;color:#333333;font-weight:normal;letter-spacing:0.7px;text-indent:0.7px;">89.6</div>
<div class="t" style="left:1063px;width:65px;text-align:center;top:1076.12px;font-size:21px;line-height:21px;color:#333333;font-weight:normal;letter-spacing:0.7px;text-indent:0.7px;">66.2</div>
<div class="t" style="left:1128px;width:66.5px;text-align:center;top:1076.12px;font-size:21px;line-height:21px;color:#333333;font-weight:normal;letter-spacing:0.7px;text-indent:0.7px;">77.0</div>
<div class="t" style="left:1194.5px;width:65.0px;text-align:center;top:1076.12px;font-size:21px;line-height:21px;color:#333333;font-weight:normal;letter-spacing:0.7px;text-indent:0.7px;">69.8</div>
<div class="t" style="left:1259.5px;width:77.5px;text-align:center;top:1076.12px;font-size:21px;line-height:21px;color:#333333;font-weight:normal;letter-spacing:0.7px;text-indent:0.7px;">163.4</div>
<div class="t" style="left:1337px;width:78.5px;text-align:center;top:1076.12px;font-size:21px;line-height:21px;color:#333333;font-weight:normal;letter-spacing:0.7px;text-indent:0.7px;">-0.4</div>
<div class="t" style="left:1415.5px;width:77.5px;text-align:center;top:1076.12px;font-size:21px;line-height:21px;color:#333333;font-weight:normal;letter-spacing:0.7px;text-indent:0.7px;">-</div>
<div class="t" style="left:1493px;width:77.5px;text-align:center;top:1076.12px;font-size:21px;line-height:21px;color:#333333;font-weight:normal;letter-spacing:0.7px;text-indent:0.7px;">-</div>
<div class="r" style="left:239px;top:1131px;width:125px;height:85px;background:#437012;"></div>
<div class="r" style="left:582px;top:1131px;width:78px;height:85px;background:#99ccff;"></div>
<div class="r" style="left:50px;top:1215px;width:1650px;height:1px;background:rgba(0,0,0,0.13);"></div>
<div class="r" style="left:50px;top:1131px;width:1px;height:84px;background:rgba(0,0,0,0.13);"></div>
<div class="r" style="left:237px;top:1131px;width:2px;height:84px;background:rgba(0,0,0,0.075);"></div>
<div class="r" style="left:363px;top:1131px;width:2px;height:84px;background:rgba(0,0,0,0.075);"></div>
<div class="r" style="left:455px;top:1131px;width:1px;height:84px;background:rgba(0,0,0,0.13);"></div>
<div class="r" style="left:581px;top:1131px;width:2px;height:84px;background:rgba(0,0,0,0.075);"></div>
<div class="r" style="left:660px;top:1131px;width:1px;height:84px;background:rgba(0,0,0,0.13);"></div>
<div class="r" style="left:737px;top:1131px;width:2px;height:84px;background:rgba(0,0,0,0.075);"></div>
<div class="r" style="left:801px;top:1131px;width:2px;height:84px;background:rgba(0,0,0,0.075);"></div>
<div class="r" style="left:867px;top:1131px;width:2px;height:84px;background:rgba(0,0,0,0.075);"></div>
<div class="r" style="left:932px;top:1131px;width:2px;height:84px;background:rgba(0,0,0,0.075);"></div>
<div class="r" style="left:996px;top:1131px;width:2px;height:84px;background:rgba(0,0,0,0.075);"></div>
<div class="r" style="left:1062px;top:1131px;width:2px;height:84px;background:rgba(0,0,0,0.075);"></div>
<div class="r" style="left:1127px;top:1131px;width:2px;height:84px;background:rgba(0,0,0,0.075);"></div>
<div class="r" style="left:1194px;top:1131px;width:1px;height:84px;background:rgba(0,0,0,0.13);"></div>
<div class="r" style="left:1259px;top:1131px;width:1px;height:84px;background:rgba(0,0,0,0.13);"></div>
<div class="r" style="left:1336px;top:1131px;width:2px;height:84px;background:rgba(0,0,0,0.075);"></div>
<div class="r" style="left:1415px;top:1131px;width:1px;height:84px;background:rgba(0,0,0,0.13);"></div>
<div class="r" style="left:1492px;top:1131px;width:2px;height:84px;background:rgba(0,0,0,0.075);"></div>
<div class="r" style="left:1570px;top:1131px;width:1px;height:84px;background:rgba(0,0,0,0.13);"></div>
<div class="t" style="left:51px;width:187px;text-align:center;top:1146.12px;font-size:21px;line-height:21px;color:#333333;font-weight:normal;letter-spacing:1.1px;text-indent:1.1px;">2022-11-22</div>
<div class="t" style="left:51px;width:187px;text-align:center;top:1175.92px;font-size:21px;line-height:21px;color:#333333;font-weight:normal;letter-spacing:1.35px;text-indent:1.35px;">13:51:36</div>
<div class="t" style="left:238px;width:126px;text-align:center;top:1161.12px;font-size:21px;line-height:21px;color:#fff;font-weight:normal;letter-spacing:0px;text-indent:0px;">ON</div>
<div class="t" style="left:364px;width:91px;text-align:center;top:1161.12px;font-size:21px;line-height:21px;color:#333333;font-weight:normal;letter-spacing:0.7px;text-indent:0.7px;">Normal</div>
<svg class="r" style="left:465px;top:1138.70px" width="110" height="68" viewBox="0 0 110 68">
<path d="M16.15 6.6 L12.52 12.29 A4.3 4.3 0 1 0 19.78 12.29 Z" fill="#8e5a2a" stroke="#000" stroke-width="1.5" stroke-linejoin="round"/>
<path d="M7.6 21.7 Q10.55 25.2 13.5 21.7 Q16.2 25.2 18.9 21.7 Q21.8 25.2 24.6 21.7 V29.2 H7.6 Z" fill="#8e5a2a"/>
<path d="M7.6 21.7 Q10.55 25.2 13.5 21.7 Q16.2 25.2 18.9 21.7 Q21.8 25.2 24.6 21.7" fill="none" stroke="#000" stroke-width="1.3" stroke-linejoin="round"/>
<path d="M4.2 14.3 Q6.6 13.6 7.1 15.6 V28 Q7.1 30.1 9.3 30.1 H22.9 Q25.1 30.1 25.1 28 V15.6 Q25.6 13.6 27.9 14.2" fill="none" stroke="#000" stroke-width="1.65" stroke-linecap="round" stroke-linejoin="round"/>
<path d="M41.1 4.6 L32.37 16.82 A10.7 10.7 0 1 0 49.83 16.82 Z" fill="#4a90e2" stroke="#000" stroke-width="2.5" stroke-linejoin="miter" stroke-miterlimit="10"/>
<g stroke="#fff" stroke-width="1.15" stroke-linecap="round" fill="none"><path d="M41.20 23.20 L41.20 16.50 M41.20 23.20 L47.00 19.85 M41.20 23.20 L47.00 26.55 M41.20 23.20 L41.20 29.90 M41.20 23.20 L35.40 26.55 M41.20 23.20 L35.40 19.85"/><path stroke-width="0.95" d="M41.20 18.38 L39.97 16.80 M41.20 18.38 L42.43 16.80 M45.38 20.79 L46.13 18.93 M45.38 20.79 L47.36 21.07 M45.38 25.61 L47.36 25.33 M45.38 25.61 L46.13 27.47 M41.20 28.02 L42.43 29.60 M41.20 28.02 L39.97 29.60 M37.02 25.61 L36.27 27.47 M37.02 25.61 L35.04 25.33 M37.02 20.79 L35.04 21.07 M37.02 20.79 L36.27 18.93"/></g>
<path d="M55.1 8.9 H59.2 V6.3 H73.1 V8.9 H79 V31.1 H55.1 Z" fill="#fff" stroke="#000" stroke-width="1.95"/>
<path d="M59.5 13.7 L72.9 26.3 M72.9 13.7 L59.5 26.3" stroke="#000" stroke-width="2.1"/>
<path d="M79 8.9 H84.2 V6.3 H98 V8.9 H102.8 V31.1 H79 Z" fill="#fff" stroke="#000" stroke-width="1.95"/>
<path d="M79 8.9 V31.1" stroke="#000" stroke-width="3.7"/>
<ellipse cx="88.7" cy="25.5" rx="3.2" ry="2.3" transform="rotate(-25 88.7 25.5)" fill="#000"/>
<path d="M91.7 25 V10.6" fill="none" stroke="#000" stroke-width="1.2"/>
<path d="M91.1 10.4 C92 13.2 96.6 14.2 95.9 18.6 C95.4 16.4 93.6 15.4 91.1 15 Z" fill="#000"/>
<path d="M42.2 41.45 H46.95 V38.5 H60.7 V41.45 H65.1 V64.0 H42.2 Z" fill="#fff" stroke="#000" stroke-width="1.95"/>
<path d="M45.1 44.9 H62 L60 49 H45.1 Z" fill="#d6d6d6"/>
<path d="M45.1 50.5 H59 L57.3 54.2 H45.1 Z" fill="#d6d6d6"/>
<path d="M45.1 55.8 H56 L54.1 60.2 H45.1 Z" fill="#4a90e2"/>
</svg>
<div class="t" style="left:582px;width:79px;text-align:center;top:1161.12px;font-size:21px;line-height:21px;color:#333333;font-weight:normal;letter-spacing:-0.2px;text-indent:-0.2px;">Cool</div>
<div class="t" style="left:661px;width:77px;text-align:center;top:1161.12px;font-size:21px;line-height:21px;color:#333333;font-weight:normal;letter-spacing:0.7px;text-indent:0.7px;">170.6</div>
<div class="t" style="left:738px;width:64px;text-align:center;top:1161.12px;font-size:21px;line-height:21px;color:#333333;font-weight:normal;letter-spacing:0.7px;text-indent:0.7px;">-0.4</div>
<div class="t" style="left:802px;width:66px;text-align:center;top:1161.12px;font-size:21px;line-height:21px;color:#333333;font-weight:normal;letter-spacing:0.7px;text-indent:0.7px;">77.0</div>
<div class="t" style="left:868px;width:65px;text-align:center;top:1161.12px;font-size:21px;line-height:21px;color:#333333;font-weight:normal;letter-spacing:0.7px;text-indent:0.7px;">60.8</div>
<div class="t" style="left:933px;width:64px;text-align:center;top:1161.12px;font-size:21px;line-height:21px;color:#333333;font-weight:normal;letter-spacing:0.7px;text-indent:0.7px;">-0.4</div>
<div class="t" style="left:997px;width:66px;text-align:center;top:1161.12px;font-size:21px;line-height:21px;color:#333333;font-weight:normal;letter-spacing:0.7px;text-indent:0.7px;">89.6</div>
<div class="t" style="left:1063px;width:65px;text-align:center;top:1161.12px;font-size:21px;line-height:21px;color:#333333;font-weight:normal;letter-spacing:0.7px;text-indent:0.7px;">66.2</div>
<div class="t" style="left:1128px;width:66.5px;text-align:center;top:1161.12px;font-size:21px;line-height:21px;color:#333333;font-weight:normal;letter-spacing:0.7px;text-indent:0.7px;">77.0</div>
<div class="t" style="left:1194.5px;width:65.0px;text-align:center;top:1161.12px;font-size:21px;line-height:21px;color:#333333;font-weight:normal;letter-spacing:0.7px;text-indent:0.7px;">69.8</div>
<div class="t" style="left:1259.5px;width:77.5px;text-align:center;top:1161.12px;font-size:21px;line-height:21px;color:#333333;font-weight:normal;letter-spacing:0.7px;text-indent:0.7px;">163.4</div>
<div class="t" style="left:1337px;width:78.5px;text-align:center;top:1161.12px;font-size:21px;line-height:21px;color:#333333;font-weight:normal;letter-spacing:0.7px;text-indent:0.7px;">-0.4</div>
<div class="t" style="left:1415.5px;width:77.5px;text-align:center;top:1161.12px;font-size:21px;line-height:21px;color:#333333;font-weight:normal;letter-spacing:0.7px;text-indent:0.7px;">-</div>
<div class="t" style="left:1493px;width:77.5px;text-align:center;top:1161.12px;font-size:21px;line-height:21px;color:#333333;font-weight:normal;letter-spacing:0.7px;text-indent:0.7px;">-</div></div>
<div class="frame"></div>
</body></html>
